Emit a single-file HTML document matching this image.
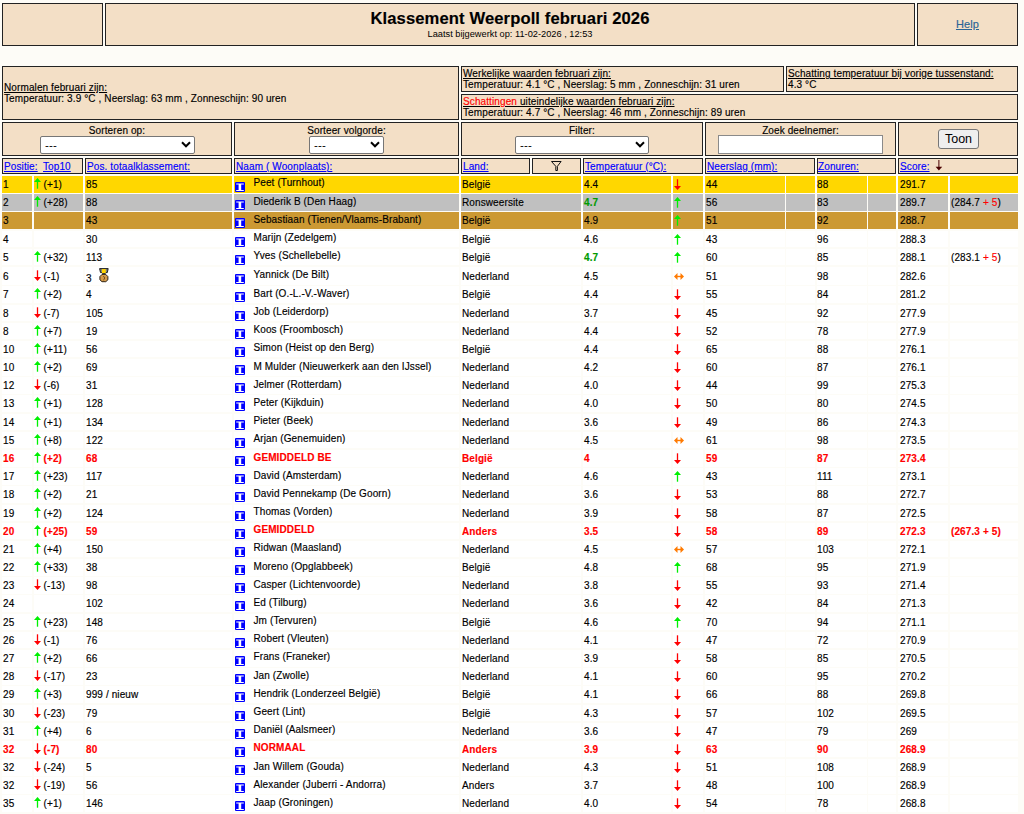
<!DOCTYPE html>
<html><head><meta charset="utf-8"><title>Klassement Weerpoll februari 2026</title>
<style>
html,body{margin:0;padding:0;background:#FDFCF7;width:1024px;height:814px;overflow:hidden;position:relative}
body{font-family:"Liberation Sans",sans-serif;color:#000}
.b{position:absolute;box-sizing:border-box;border:1px solid #222;background:#F3DFC6}
.c{position:absolute}
.t{position:absolute;font-size:10px;line-height:11px;white-space:nowrap;letter-spacing:0.11px;-webkit-text-stroke:0.15px currentColor}
.lk{color:#0000FF;text-decoration:underline}
.rd{color:#FF0000;font-weight:bold}
.ic{position:absolute;line-height:0}
.ic svg{display:block}
.sel{position:absolute;box-sizing:border-box;border:1px solid #767676;border-radius:2px;background:#fff}
.dash{position:absolute;left:4px;top:1.5px;font-size:11.5px;line-height:12px;letter-spacing:0.2px}
.inp{position:absolute;box-sizing:border-box;border:1px solid #8a8a8a;background:#fff}
.btn{position:absolute;box-sizing:border-box;border:1px solid #767676;border-radius:3px;background:#EFEFEF;font-size:12.5px;line-height:18px;text-align:center}
</style></head><body>
<div class="b" style="left:2px;top:3px;width:101px;height:43px"></div>
<div class="b" style="left:105px;top:3px;width:810px;height:43px"></div>
<div class="b" style="left:917px;top:3px;width:101px;height:43px"></div>
<div class="t" style="left:105px;top:9px;width:810px;text-align:center;font-size:16.6px;font-weight:bold;line-height:19px">Klassement Weerpoll februari 2026</div>
<div class="t" style="left:105px;top:29px;width:810px;text-align:center;font-size:9.25px;line-height:10px;-webkit-text-stroke:0;letter-spacing:0">Laatst bijgewerkt op: 11-02-2026 , 12:53</div>
<div class="t" style="left:917px;top:18px;width:101px;text-align:center;font-size:11px;line-height:13px;color:#2A6496;text-decoration:underline">Help</div>
<div class="b" style="left:2px;top:66px;width:457px;height:54px"></div>
<div class="b" style="left:461px;top:66px;width:323px;height:26px"></div>
<div class="b" style="left:786px;top:66px;width:232px;height:26px"></div>
<div class="b" style="left:461px;top:94px;width:557px;height:26px"></div>
<div class="t" style="left:4px;top:82px"><u>Normalen februari zijn:</u></div>
<div class="t" style="left:4px;top:93px">Temperatuur: 3.9 °C , Neerslag: 63 mm , Zonneschijn: 90 uren</div>
<div class="t" style="left:463px;top:68px"><u>Werkelijke waarden februari zijn:</u></div>
<div class="t" style="left:463px;top:79px">Temperatuur: 4.1 °C , Neerslag: 5 mm , Zonneschijn: 31 uren</div>
<div class="t" style="left:788px;top:68px"><u>Schatting temperatuur bij vorige tussenstand:</u></div>
<div class="t" style="left:788px;top:79px">4.3 °C</div>
<div class="t" style="left:463px;top:96px"><u><span style="color:#FF0000">Schattingen</span> uiteindelijke waarden februari zijn:</u></div>
<div class="t" style="left:463px;top:107px">Temperatuur: 4.7 °C , Neerslag: 46 mm , Zonneschijn: 89 uren</div>
<div class="b" style="left:2px;top:122px;width:230px;height:34px"></div>
<div class="b" style="left:234px;top:122px;width:225px;height:34px"></div>
<div class="b" style="left:461px;top:122px;width:242px;height:34px"></div>
<div class="b" style="left:705px;top:122px;width:191px;height:34px"></div>
<div class="b" style="left:898px;top:122px;width:120px;height:34px"></div>
<div class="t" style="left:2px;top:125px;width:230px;text-align:center;">Sorteren op:</div>
<div class="t" style="left:234px;top:125px;width:225px;text-align:center;">Sorteer volgorde:</div>
<div class="t" style="left:461px;top:125px;width:242px;text-align:center;">Filter:</div>
<div class="t" style="left:705px;top:125px;width:191px;text-align:center;">Zoek deelnemer:</div>
<div class="sel" style="left:40px;top:136px;width:155px;height:18px"><span class="dash">---</span><svg style="position:absolute;right:3px;top:4px" width="10" height="7" viewBox="0 0 10 7"><path d="M1 1.3 L5 5.3 L9 1.3" fill="none" stroke="#000" stroke-width="2"/></svg></div>
<div class="sel" style="left:309px;top:136px;width:75px;height:18px"><span class="dash">---</span><svg style="position:absolute;right:3px;top:4px" width="10" height="7" viewBox="0 0 10 7"><path d="M1 1.3 L5 5.3 L9 1.3" fill="none" stroke="#000" stroke-width="2"/></svg></div>
<div class="sel" style="left:515px;top:136px;width:134px;height:18px"><span class="dash">---</span><svg style="position:absolute;right:3px;top:4px" width="10" height="7" viewBox="0 0 10 7"><path d="M1 1.3 L5 5.3 L9 1.3" fill="none" stroke="#000" stroke-width="2"/></svg></div>
<div class="inp" style="left:718px;top:135px;width:165px;height:19px"></div>
<div class="btn" style="left:938px;top:129px;width:41px;height:20px">Toon</div>
<div class="b" style="left:2px;top:158px;width:81px;height:16px"></div>
<div class="b" style="left:85px;top:158px;width:147px;height:16px"></div>
<div class="b" style="left:234px;top:158px;width:225px;height:16px"></div>
<div class="b" style="left:461px;top:158px;width:69px;height:16px"></div>
<div class="b" style="left:532px;top:158px;width:49px;height:16px"></div>
<div class="b" style="left:583px;top:158px;width:120px;height:16px"></div>
<div class="b" style="left:705px;top:158px;width:110px;height:16px"></div>
<div class="b" style="left:817px;top:158px;width:79px;height:16px"></div>
<div class="b" style="left:898px;top:158px;width:120px;height:16px"></div>
<div class="t lk" style="left:4px;top:161px">Positie:</div>
<div class="t lk" style="left:43px;top:161px">Top10</div>
<div class="t lk" style="left:87px;top:161px">Pos. totaalklassement:</div>
<div class="t lk" style="left:236px;top:161px">Naam ( Woonplaats):</div>
<div class="t lk" style="left:463px;top:161px">Land:</div>
<svg style="position:absolute;left:551px;top:161px" width="12" height="12" viewBox="0 0 12 12"><path d="M0.5 0.5 H10.1 L6.4 5.3 V9.5 H4.8 V5.3 Z" fill="none" stroke="#111" stroke-width="1" stroke-linejoin="round"/></svg>
<div class="t lk" style="left:585px;top:161px">Temperatuur (°C):</div>
<div class="t lk" style="left:707px;top:161px">Neerslag (mm):</div>
<div class="t lk" style="left:818px;top:161px">Zonuren:</div>
<div class="t lk" style="left:900px;top:161px">Score:</div>
<svg style="position:absolute;left:935px;top:160px" width="8" height="12" viewBox="0 0 8 12"><path d="M3.9 0 V7.5" stroke="#4A0000" stroke-width="1"/><path d="M0.6 6.8 H7.2 L3.9 10.6 Z" fill="#4A0000"/></svg>
<div class="c" style="left:2px;top:176.000px;width:30px;height:16.580px;background:#FFD700"></div>
<div class="c" style="left:34px;top:176.000px;width:49px;height:16.580px;background:#FFD700"></div>
<div class="c" style="left:85px;top:176.000px;width:147px;height:16.580px;background:#FFD700"></div>
<div class="c" style="left:234px;top:176.000px;width:225px;height:16.580px;background:#FFD700"></div>
<div class="c" style="left:461px;top:176.000px;width:120px;height:16.580px;background:#FFD700"></div>
<div class="c" style="left:583px;top:176.000px;width:88px;height:16.580px;background:#FFD700"></div>
<div class="c" style="left:673px;top:176.000px;width:30px;height:16.580px;background:#FFD700"></div>
<div class="c" style="left:705px;top:176.000px;width:80px;height:16.580px;background:#FFD700"></div>
<div class="c" style="left:786px;top:176.000px;width:29px;height:16.580px;background:#FFD700"></div>
<div class="c" style="left:817px;top:176.000px;width:50px;height:16.580px;background:#FFD700"></div>
<div class="c" style="left:868px;top:176.000px;width:28px;height:16.580px;background:#FFD700"></div>
<div class="c" style="left:898px;top:176.000px;width:50px;height:16.580px;background:#FFD700"></div>
<div class="c" style="left:950px;top:176.000px;width:68px;height:16.580px;background:#FFD700"></div>
<div class="t" style="left:3px;top:179px">1</div>
<div class="ic" style="left:34px;top:177.5px"><svg width="7" height="11" viewBox="0 0 7 11"><path d="M3.5 0 L7 4 H0 Z" fill="#00F000"/><rect x="2.85" y="3.5" width="1.3" height="7.2" fill="#00F000"/></svg></div>
<div class="t" style="left:43.5px;top:179px">(+1)</div>
<div class="t" style="left:86px;top:179px">85</div>
<div class="ic" style="left:235px;top:182px"><svg width="10" height="10" viewBox="0 0 10 10"><rect x="0" y="0" width="10" height="10" rx="1" fill="#0000FF"/><path d="M1.2 1.5 H8.8 V2.6 H6.2 V7.9 H8.8 V9.1 H1.2 V7.9 H3.6 V2.6 H1.2 Z" fill="#FFF"/></svg></div>
<div class="t" style="left:253.5px;top:177px">Peet (Turnhout)</div>
<div class="t" style="left:462px;top:179px">België</div>
<div class="t" style="left:584px;top:179px">4.4</div>
<div class="ic" style="left:674px;top:179px"><svg width="7" height="11" viewBox="0 0 7 11"><rect x="2.85" y="0.3" width="1.3" height="7.2" fill="#FF0000"/><path d="M0 7 H7 L3.5 11 Z" fill="#FF0000"/></svg></div>
<div class="t" style="left:706px;top:179px">44</div>
<div class="t" style="left:817px;top:179px">88</div>
<div class="t" style="left:900px;top:179px">291.7</div>
<div class="c" style="left:2px;top:194.180px;width:30px;height:16.580px;background:#C0C0C0"></div>
<div class="c" style="left:34px;top:194.180px;width:49px;height:16.580px;background:#C0C0C0"></div>
<div class="c" style="left:85px;top:194.180px;width:147px;height:16.580px;background:#C0C0C0"></div>
<div class="c" style="left:234px;top:194.180px;width:225px;height:16.580px;background:#C0C0C0"></div>
<div class="c" style="left:461px;top:194.180px;width:120px;height:16.580px;background:#C0C0C0"></div>
<div class="c" style="left:583px;top:194.180px;width:88px;height:16.580px;background:#C0C0C0"></div>
<div class="c" style="left:673px;top:194.180px;width:30px;height:16.580px;background:#C0C0C0"></div>
<div class="c" style="left:705px;top:194.180px;width:80px;height:16.580px;background:#C0C0C0"></div>
<div class="c" style="left:786px;top:194.180px;width:29px;height:16.580px;background:#C0C0C0"></div>
<div class="c" style="left:817px;top:194.180px;width:50px;height:16.580px;background:#C0C0C0"></div>
<div class="c" style="left:868px;top:194.180px;width:28px;height:16.580px;background:#C0C0C0"></div>
<div class="c" style="left:898px;top:194.180px;width:50px;height:16.580px;background:#C0C0C0"></div>
<div class="c" style="left:950px;top:194.180px;width:68px;height:16.580px;background:#C0C0C0"></div>
<div class="t" style="left:3px;top:197px">2</div>
<div class="ic" style="left:34px;top:195.5px"><svg width="7" height="11" viewBox="0 0 7 11"><path d="M3.5 0 L7 4 H0 Z" fill="#00F000"/><rect x="2.85" y="3.5" width="1.3" height="7.2" fill="#00F000"/></svg></div>
<div class="t" style="left:43.5px;top:197px">(+28)</div>
<div class="t" style="left:86px;top:197px">88</div>
<div class="ic" style="left:235px;top:200px"><svg width="10" height="10" viewBox="0 0 10 10"><rect x="0" y="0" width="10" height="10" rx="1" fill="#0000FF"/><path d="M1.2 1.5 H8.8 V2.6 H6.2 V7.9 H8.8 V9.1 H1.2 V7.9 H3.6 V2.6 H1.2 Z" fill="#FFF"/></svg></div>
<div class="t" style="left:253.5px;top:196px">Diederik B (Den Haag)</div>
<div class="t" style="left:462px;top:197px">Ronsweersite</div>
<div class="t" style="left:584px;top:197px;font-weight:bold;color:#009A00">4.7</div>
<div class="ic" style="left:674px;top:197px"><svg width="7" height="11" viewBox="0 0 7 11"><path d="M3.5 0 L7 4 H0 Z" fill="#00F000"/><rect x="2.85" y="3.5" width="1.3" height="7.2" fill="#00F000"/></svg></div>
<div class="t" style="left:706px;top:197px">56</div>
<div class="t" style="left:817px;top:197px">83</div>
<div class="t" style="left:900px;top:197px">289.7</div>
<div class="t" style="left:951px;top:197px">(284.7 <span style="color:#FF0000">+ 5</span>)</div>
<div class="c" style="left:2px;top:212.360px;width:30px;height:16.580px;background:#CC9933"></div>
<div class="c" style="left:34px;top:212.360px;width:49px;height:16.580px;background:#CC9933"></div>
<div class="c" style="left:85px;top:212.360px;width:147px;height:16.580px;background:#CC9933"></div>
<div class="c" style="left:234px;top:212.360px;width:225px;height:16.580px;background:#CC9933"></div>
<div class="c" style="left:461px;top:212.360px;width:120px;height:16.580px;background:#CC9933"></div>
<div class="c" style="left:583px;top:212.360px;width:88px;height:16.580px;background:#CC9933"></div>
<div class="c" style="left:673px;top:212.360px;width:30px;height:16.580px;background:#CC9933"></div>
<div class="c" style="left:705px;top:212.360px;width:80px;height:16.580px;background:#CC9933"></div>
<div class="c" style="left:786px;top:212.360px;width:29px;height:16.580px;background:#CC9933"></div>
<div class="c" style="left:817px;top:212.360px;width:50px;height:16.580px;background:#CC9933"></div>
<div class="c" style="left:868px;top:212.360px;width:28px;height:16.580px;background:#CC9933"></div>
<div class="c" style="left:898px;top:212.360px;width:50px;height:16.580px;background:#CC9933"></div>
<div class="c" style="left:950px;top:212.360px;width:68px;height:16.580px;background:#CC9933"></div>
<div class="t" style="left:3px;top:215px">3</div>
<div class="t" style="left:86px;top:215px">43</div>
<div class="ic" style="left:235px;top:218px"><svg width="10" height="10" viewBox="0 0 10 10"><rect x="0" y="0" width="10" height="10" rx="1" fill="#0000FF"/><path d="M1.2 1.5 H8.8 V2.6 H6.2 V7.9 H8.8 V9.1 H1.2 V7.9 H3.6 V2.6 H1.2 Z" fill="#FFF"/></svg></div>
<div class="t" style="left:253.5px;top:214px">Sebastiaan (Tienen/Vlaams-Brabant)</div>
<div class="t" style="left:462px;top:215px">België</div>
<div class="t" style="left:584px;top:215px">4.9</div>
<div class="ic" style="left:674px;top:215px"><svg width="7" height="11" viewBox="0 0 7 11"><path d="M3.5 0 L7 4 H0 Z" fill="#00F000"/><rect x="2.85" y="3.5" width="1.3" height="7.2" fill="#00F000"/></svg></div>
<div class="t" style="left:706px;top:215px">51</div>
<div class="t" style="left:817px;top:215px">92</div>
<div class="t" style="left:900px;top:215px">288.7</div>
<div class="c" style="left:2px;top:230.540px;width:30px;height:16.580px;background:#FFFFFF"></div>
<div class="c" style="left:34px;top:230.540px;width:49px;height:16.580px;background:#FFFFFF"></div>
<div class="c" style="left:85px;top:230.540px;width:147px;height:16.580px;background:#FFFFFF"></div>
<div class="c" style="left:234px;top:230.540px;width:225px;height:16.580px;background:#FFFFFF"></div>
<div class="c" style="left:461px;top:230.540px;width:120px;height:16.580px;background:#FFFFFF"></div>
<div class="c" style="left:583px;top:230.540px;width:88px;height:16.580px;background:#FFFFFF"></div>
<div class="c" style="left:673px;top:230.540px;width:30px;height:16.580px;background:#FFFFFF"></div>
<div class="c" style="left:705px;top:230.540px;width:80px;height:16.580px;background:#FFFFFF"></div>
<div class="c" style="left:786px;top:230.540px;width:29px;height:16.580px;background:#FFFFFF"></div>
<div class="c" style="left:817px;top:230.540px;width:50px;height:16.580px;background:#FFFFFF"></div>
<div class="c" style="left:868px;top:230.540px;width:28px;height:16.580px;background:#FFFFFF"></div>
<div class="c" style="left:898px;top:230.540px;width:50px;height:16.580px;background:#FFFFFF"></div>
<div class="c" style="left:950px;top:230.540px;width:68px;height:16.580px;background:#FFFFFF"></div>
<div class="t" style="left:3px;top:234px">4</div>
<div class="t" style="left:86px;top:234px">30</div>
<div class="ic" style="left:235px;top:237px"><svg width="10" height="10" viewBox="0 0 10 10"><rect x="0" y="0" width="10" height="10" rx="1" fill="#0000FF"/><path d="M1.2 1.5 H8.8 V2.6 H6.2 V7.9 H8.8 V9.1 H1.2 V7.9 H3.6 V2.6 H1.2 Z" fill="#FFF"/></svg></div>
<div class="t" style="left:253.5px;top:232px">Marijn (Zedelgem)</div>
<div class="t" style="left:462px;top:234px">België</div>
<div class="t" style="left:584px;top:234px">4.6</div>
<div class="ic" style="left:674px;top:234px"><svg width="7" height="11" viewBox="0 0 7 11"><path d="M3.5 0 L7 4 H0 Z" fill="#00F000"/><rect x="2.85" y="3.5" width="1.3" height="7.2" fill="#00F000"/></svg></div>
<div class="t" style="left:706px;top:234px">43</div>
<div class="t" style="left:817px;top:234px">96</div>
<div class="t" style="left:900px;top:234px">288.3</div>
<div class="c" style="left:2px;top:248.720px;width:30px;height:16.580px;background:#FFFFFF"></div>
<div class="c" style="left:34px;top:248.720px;width:49px;height:16.580px;background:#FFFFFF"></div>
<div class="c" style="left:85px;top:248.720px;width:147px;height:16.580px;background:#FFFFFF"></div>
<div class="c" style="left:234px;top:248.720px;width:225px;height:16.580px;background:#FFFFFF"></div>
<div class="c" style="left:461px;top:248.720px;width:120px;height:16.580px;background:#FFFFFF"></div>
<div class="c" style="left:583px;top:248.720px;width:88px;height:16.580px;background:#FFFFFF"></div>
<div class="c" style="left:673px;top:248.720px;width:30px;height:16.580px;background:#FFFFFF"></div>
<div class="c" style="left:705px;top:248.720px;width:80px;height:16.580px;background:#FFFFFF"></div>
<div class="c" style="left:786px;top:248.720px;width:29px;height:16.580px;background:#FFFFFF"></div>
<div class="c" style="left:817px;top:248.720px;width:50px;height:16.580px;background:#FFFFFF"></div>
<div class="c" style="left:868px;top:248.720px;width:28px;height:16.580px;background:#FFFFFF"></div>
<div class="c" style="left:898px;top:248.720px;width:50px;height:16.580px;background:#FFFFFF"></div>
<div class="c" style="left:950px;top:248.720px;width:68px;height:16.580px;background:#FFFFFF"></div>
<div class="t" style="left:3px;top:252px">5</div>
<div class="ic" style="left:34px;top:250.5px"><svg width="7" height="11" viewBox="0 0 7 11"><path d="M3.5 0 L7 4 H0 Z" fill="#00F000"/><rect x="2.85" y="3.5" width="1.3" height="7.2" fill="#00F000"/></svg></div>
<div class="t" style="left:43.5px;top:252px">(+32)</div>
<div class="t" style="left:86px;top:252px">113</div>
<div class="ic" style="left:235px;top:255px"><svg width="10" height="10" viewBox="0 0 10 10"><rect x="0" y="0" width="10" height="10" rx="1" fill="#0000FF"/><path d="M1.2 1.5 H8.8 V2.6 H6.2 V7.9 H8.8 V9.1 H1.2 V7.9 H3.6 V2.6 H1.2 Z" fill="#FFF"/></svg></div>
<div class="t" style="left:253.5px;top:250px">Yves (Schellebelle)</div>
<div class="t" style="left:462px;top:252px">België</div>
<div class="t" style="left:584px;top:252px;font-weight:bold;color:#009A00">4.7</div>
<div class="ic" style="left:674px;top:252px"><svg width="7" height="11" viewBox="0 0 7 11"><path d="M3.5 0 L7 4 H0 Z" fill="#00F000"/><rect x="2.85" y="3.5" width="1.3" height="7.2" fill="#00F000"/></svg></div>
<div class="t" style="left:706px;top:252px">60</div>
<div class="t" style="left:817px;top:252px">85</div>
<div class="t" style="left:900px;top:252px">288.1</div>
<div class="t" style="left:951px;top:252px">(283.1 <span style="color:#FF0000">+ 5</span>)</div>
<div class="c" style="left:2px;top:266.900px;width:30px;height:17.880px;background:#FFFFFF"></div>
<div class="c" style="left:34px;top:266.900px;width:49px;height:17.880px;background:#FFFFFF"></div>
<div class="c" style="left:85px;top:266.900px;width:147px;height:17.880px;background:#FFFFFF"></div>
<div class="c" style="left:234px;top:266.900px;width:225px;height:17.880px;background:#FFFFFF"></div>
<div class="c" style="left:461px;top:266.900px;width:120px;height:17.880px;background:#FFFFFF"></div>
<div class="c" style="left:583px;top:266.900px;width:88px;height:17.880px;background:#FFFFFF"></div>
<div class="c" style="left:673px;top:266.900px;width:30px;height:17.880px;background:#FFFFFF"></div>
<div class="c" style="left:705px;top:266.900px;width:80px;height:17.880px;background:#FFFFFF"></div>
<div class="c" style="left:786px;top:266.900px;width:29px;height:17.880px;background:#FFFFFF"></div>
<div class="c" style="left:817px;top:266.900px;width:50px;height:17.880px;background:#FFFFFF"></div>
<div class="c" style="left:868px;top:266.900px;width:28px;height:17.880px;background:#FFFFFF"></div>
<div class="c" style="left:898px;top:266.900px;width:50px;height:17.880px;background:#FFFFFF"></div>
<div class="c" style="left:950px;top:266.900px;width:68px;height:17.880px;background:#FFFFFF"></div>
<div class="t" style="left:3px;top:271px">6</div>
<div class="ic" style="left:34px;top:269.5px"><svg width="7" height="11" viewBox="0 0 7 11"><rect x="2.85" y="0.3" width="1.3" height="7.2" fill="#FF0000"/><path d="M0 7 H7 L3.5 11 Z" fill="#FF0000"/></svg></div>
<div class="t" style="left:43.5px;top:271px">(-1)</div>
<div class="t" style="left:86px;top:273px">3</div>
<div class="ic" style="left:99.3px;top:268px"><svg width="10" height="15" viewBox="0 0 10 15"><path d="M0.6 0.6 H9.2 L8.3 4.6 H1.5 Z" fill="#7A7F86" stroke="#111" stroke-width="0.9"/><rect x="2.9" y="1.1" width="3.9" height="4" fill="#FFD400"/><rect x="3.2" y="5.2" width="3.4" height="1.1" fill="#111"/><path d="M3 6.4 H6.8 L8.9 8.6 V11.8 L6.8 13.7 H3 L0.9 11.8 V8.6 Z" fill="#D49A4A" stroke="#1A1208" stroke-width="0.9"/><path d="M4.3 8.4 Q6.3 9.4 5.4 10.2 Q6.3 11 4.3 12" fill="none" stroke="#5A3A10" stroke-width="0.9"/></svg></div>
<div class="ic" style="left:235px;top:274px"><svg width="10" height="10" viewBox="0 0 10 10"><rect x="0" y="0" width="10" height="10" rx="1" fill="#0000FF"/><path d="M1.2 1.5 H8.8 V2.6 H6.2 V7.9 H8.8 V9.1 H1.2 V7.9 H3.6 V2.6 H1.2 Z" fill="#FFF"/></svg></div>
<div class="t" style="left:253.5px;top:269px">Yannick (De Bilt)</div>
<div class="t" style="left:462px;top:271px">Nederland</div>
<div class="t" style="left:584px;top:271px">4.5</div>
<div class="ic" style="left:674px;top:273px"><svg width="10" height="7" viewBox="0 0 10 7"><path d="M0 3.5 L3.5 0 V7 Z" fill="#FF7A00"/><path d="M10 3.5 L6.5 0 V7 Z" fill="#FF7A00"/><rect x="3" y="2.8" width="4" height="1.4" fill="#FF7A00"/></svg></div>
<div class="t" style="left:706px;top:271px">51</div>
<div class="t" style="left:817px;top:271px">98</div>
<div class="t" style="left:900px;top:271px">282.6</div>
<div class="c" style="left:2px;top:286.380px;width:30px;height:16.580px;background:#FFFFFF"></div>
<div class="c" style="left:34px;top:286.380px;width:49px;height:16.580px;background:#FFFFFF"></div>
<div class="c" style="left:85px;top:286.380px;width:147px;height:16.580px;background:#FFFFFF"></div>
<div class="c" style="left:234px;top:286.380px;width:225px;height:16.580px;background:#FFFFFF"></div>
<div class="c" style="left:461px;top:286.380px;width:120px;height:16.580px;background:#FFFFFF"></div>
<div class="c" style="left:583px;top:286.380px;width:88px;height:16.580px;background:#FFFFFF"></div>
<div class="c" style="left:673px;top:286.380px;width:30px;height:16.580px;background:#FFFFFF"></div>
<div class="c" style="left:705px;top:286.380px;width:80px;height:16.580px;background:#FFFFFF"></div>
<div class="c" style="left:786px;top:286.380px;width:29px;height:16.580px;background:#FFFFFF"></div>
<div class="c" style="left:817px;top:286.380px;width:50px;height:16.580px;background:#FFFFFF"></div>
<div class="c" style="left:868px;top:286.380px;width:28px;height:16.580px;background:#FFFFFF"></div>
<div class="c" style="left:898px;top:286.380px;width:50px;height:16.580px;background:#FFFFFF"></div>
<div class="c" style="left:950px;top:286.380px;width:68px;height:16.580px;background:#FFFFFF"></div>
<div class="t" style="left:3px;top:289px">7</div>
<div class="ic" style="left:34px;top:287.5px"><svg width="7" height="11" viewBox="0 0 7 11"><path d="M3.5 0 L7 4 H0 Z" fill="#00F000"/><rect x="2.85" y="3.5" width="1.3" height="7.2" fill="#00F000"/></svg></div>
<div class="t" style="left:43.5px;top:289px">(+2)</div>
<div class="t" style="left:86px;top:289px">4</div>
<div class="ic" style="left:235px;top:292px"><svg width="10" height="10" viewBox="0 0 10 10"><rect x="0" y="0" width="10" height="10" rx="1" fill="#0000FF"/><path d="M1.2 1.5 H8.8 V2.6 H6.2 V7.9 H8.8 V9.1 H1.2 V7.9 H3.6 V2.6 H1.2 Z" fill="#FFF"/></svg></div>
<div class="t" style="left:253.5px;top:288px">Bart (O.-L.-V.-Waver)</div>
<div class="t" style="left:462px;top:289px">België</div>
<div class="t" style="left:584px;top:289px">4.4</div>
<div class="ic" style="left:674px;top:289px"><svg width="7" height="11" viewBox="0 0 7 11"><rect x="2.85" y="0.3" width="1.3" height="7.2" fill="#FF0000"/><path d="M0 7 H7 L3.5 11 Z" fill="#FF0000"/></svg></div>
<div class="t" style="left:706px;top:289px">55</div>
<div class="t" style="left:817px;top:289px">84</div>
<div class="t" style="left:900px;top:289px">281.2</div>
<div class="c" style="left:2px;top:304.560px;width:30px;height:16.580px;background:#FFFFFF"></div>
<div class="c" style="left:34px;top:304.560px;width:49px;height:16.580px;background:#FFFFFF"></div>
<div class="c" style="left:85px;top:304.560px;width:147px;height:16.580px;background:#FFFFFF"></div>
<div class="c" style="left:234px;top:304.560px;width:225px;height:16.580px;background:#FFFFFF"></div>
<div class="c" style="left:461px;top:304.560px;width:120px;height:16.580px;background:#FFFFFF"></div>
<div class="c" style="left:583px;top:304.560px;width:88px;height:16.580px;background:#FFFFFF"></div>
<div class="c" style="left:673px;top:304.560px;width:30px;height:16.580px;background:#FFFFFF"></div>
<div class="c" style="left:705px;top:304.560px;width:80px;height:16.580px;background:#FFFFFF"></div>
<div class="c" style="left:786px;top:304.560px;width:29px;height:16.580px;background:#FFFFFF"></div>
<div class="c" style="left:817px;top:304.560px;width:50px;height:16.580px;background:#FFFFFF"></div>
<div class="c" style="left:868px;top:304.560px;width:28px;height:16.580px;background:#FFFFFF"></div>
<div class="c" style="left:898px;top:304.560px;width:50px;height:16.580px;background:#FFFFFF"></div>
<div class="c" style="left:950px;top:304.560px;width:68px;height:16.580px;background:#FFFFFF"></div>
<div class="t" style="left:3px;top:308px">8</div>
<div class="ic" style="left:34px;top:306.5px"><svg width="7" height="11" viewBox="0 0 7 11"><rect x="2.85" y="0.3" width="1.3" height="7.2" fill="#FF0000"/><path d="M0 7 H7 L3.5 11 Z" fill="#FF0000"/></svg></div>
<div class="t" style="left:43.5px;top:308px">(-7)</div>
<div class="t" style="left:86px;top:308px">105</div>
<div class="ic" style="left:235px;top:311px"><svg width="10" height="10" viewBox="0 0 10 10"><rect x="0" y="0" width="10" height="10" rx="1" fill="#0000FF"/><path d="M1.2 1.5 H8.8 V2.6 H6.2 V7.9 H8.8 V9.1 H1.2 V7.9 H3.6 V2.6 H1.2 Z" fill="#FFF"/></svg></div>
<div class="t" style="left:253.5px;top:306px">Job (Leiderdorp)</div>
<div class="t" style="left:462px;top:308px">Nederland</div>
<div class="t" style="left:584px;top:308px">3.7</div>
<div class="ic" style="left:674px;top:308px"><svg width="7" height="11" viewBox="0 0 7 11"><rect x="2.85" y="0.3" width="1.3" height="7.2" fill="#FF0000"/><path d="M0 7 H7 L3.5 11 Z" fill="#FF0000"/></svg></div>
<div class="t" style="left:706px;top:308px">45</div>
<div class="t" style="left:817px;top:308px">92</div>
<div class="t" style="left:900px;top:308px">277.9</div>
<div class="c" style="left:2px;top:322.740px;width:30px;height:16.580px;background:#FFFFFF"></div>
<div class="c" style="left:34px;top:322.740px;width:49px;height:16.580px;background:#FFFFFF"></div>
<div class="c" style="left:85px;top:322.740px;width:147px;height:16.580px;background:#FFFFFF"></div>
<div class="c" style="left:234px;top:322.740px;width:225px;height:16.580px;background:#FFFFFF"></div>
<div class="c" style="left:461px;top:322.740px;width:120px;height:16.580px;background:#FFFFFF"></div>
<div class="c" style="left:583px;top:322.740px;width:88px;height:16.580px;background:#FFFFFF"></div>
<div class="c" style="left:673px;top:322.740px;width:30px;height:16.580px;background:#FFFFFF"></div>
<div class="c" style="left:705px;top:322.740px;width:80px;height:16.580px;background:#FFFFFF"></div>
<div class="c" style="left:786px;top:322.740px;width:29px;height:16.580px;background:#FFFFFF"></div>
<div class="c" style="left:817px;top:322.740px;width:50px;height:16.580px;background:#FFFFFF"></div>
<div class="c" style="left:868px;top:322.740px;width:28px;height:16.580px;background:#FFFFFF"></div>
<div class="c" style="left:898px;top:322.740px;width:50px;height:16.580px;background:#FFFFFF"></div>
<div class="c" style="left:950px;top:322.740px;width:68px;height:16.580px;background:#FFFFFF"></div>
<div class="t" style="left:3px;top:326px">8</div>
<div class="ic" style="left:34px;top:324.5px"><svg width="7" height="11" viewBox="0 0 7 11"><path d="M3.5 0 L7 4 H0 Z" fill="#00F000"/><rect x="2.85" y="3.5" width="1.3" height="7.2" fill="#00F000"/></svg></div>
<div class="t" style="left:43.5px;top:326px">(+7)</div>
<div class="t" style="left:86px;top:326px">19</div>
<div class="ic" style="left:235px;top:329px"><svg width="10" height="10" viewBox="0 0 10 10"><rect x="0" y="0" width="10" height="10" rx="1" fill="#0000FF"/><path d="M1.2 1.5 H8.8 V2.6 H6.2 V7.9 H8.8 V9.1 H1.2 V7.9 H3.6 V2.6 H1.2 Z" fill="#FFF"/></svg></div>
<div class="t" style="left:253.5px;top:324px">Koos (Froombosch)</div>
<div class="t" style="left:462px;top:326px">Nederland</div>
<div class="t" style="left:584px;top:326px">4.4</div>
<div class="ic" style="left:674px;top:326px"><svg width="7" height="11" viewBox="0 0 7 11"><rect x="2.85" y="0.3" width="1.3" height="7.2" fill="#FF0000"/><path d="M0 7 H7 L3.5 11 Z" fill="#FF0000"/></svg></div>
<div class="t" style="left:706px;top:326px">52</div>
<div class="t" style="left:817px;top:326px">78</div>
<div class="t" style="left:900px;top:326px">277.9</div>
<div class="c" style="left:2px;top:340.920px;width:30px;height:16.580px;background:#FFFFFF"></div>
<div class="c" style="left:34px;top:340.920px;width:49px;height:16.580px;background:#FFFFFF"></div>
<div class="c" style="left:85px;top:340.920px;width:147px;height:16.580px;background:#FFFFFF"></div>
<div class="c" style="left:234px;top:340.920px;width:225px;height:16.580px;background:#FFFFFF"></div>
<div class="c" style="left:461px;top:340.920px;width:120px;height:16.580px;background:#FFFFFF"></div>
<div class="c" style="left:583px;top:340.920px;width:88px;height:16.580px;background:#FFFFFF"></div>
<div class="c" style="left:673px;top:340.920px;width:30px;height:16.580px;background:#FFFFFF"></div>
<div class="c" style="left:705px;top:340.920px;width:80px;height:16.580px;background:#FFFFFF"></div>
<div class="c" style="left:786px;top:340.920px;width:29px;height:16.580px;background:#FFFFFF"></div>
<div class="c" style="left:817px;top:340.920px;width:50px;height:16.580px;background:#FFFFFF"></div>
<div class="c" style="left:868px;top:340.920px;width:28px;height:16.580px;background:#FFFFFF"></div>
<div class="c" style="left:898px;top:340.920px;width:50px;height:16.580px;background:#FFFFFF"></div>
<div class="c" style="left:950px;top:340.920px;width:68px;height:16.580px;background:#FFFFFF"></div>
<div class="t" style="left:3px;top:344px">10</div>
<div class="ic" style="left:34px;top:342.5px"><svg width="7" height="11" viewBox="0 0 7 11"><path d="M3.5 0 L7 4 H0 Z" fill="#00F000"/><rect x="2.85" y="3.5" width="1.3" height="7.2" fill="#00F000"/></svg></div>
<div class="t" style="left:43.5px;top:344px">(+11)</div>
<div class="t" style="left:86px;top:344px">56</div>
<div class="ic" style="left:235px;top:347px"><svg width="10" height="10" viewBox="0 0 10 10"><rect x="0" y="0" width="10" height="10" rx="1" fill="#0000FF"/><path d="M1.2 1.5 H8.8 V2.6 H6.2 V7.9 H8.8 V9.1 H1.2 V7.9 H3.6 V2.6 H1.2 Z" fill="#FFF"/></svg></div>
<div class="t" style="left:253.5px;top:342px">Simon (Heist op den Berg)</div>
<div class="t" style="left:462px;top:344px">België</div>
<div class="t" style="left:584px;top:344px">4.4</div>
<div class="ic" style="left:674px;top:344px"><svg width="7" height="11" viewBox="0 0 7 11"><rect x="2.85" y="0.3" width="1.3" height="7.2" fill="#FF0000"/><path d="M0 7 H7 L3.5 11 Z" fill="#FF0000"/></svg></div>
<div class="t" style="left:706px;top:344px">65</div>
<div class="t" style="left:817px;top:344px">88</div>
<div class="t" style="left:900px;top:344px">276.1</div>
<div class="c" style="left:2px;top:359.100px;width:30px;height:16.580px;background:#FFFFFF"></div>
<div class="c" style="left:34px;top:359.100px;width:49px;height:16.580px;background:#FFFFFF"></div>
<div class="c" style="left:85px;top:359.100px;width:147px;height:16.580px;background:#FFFFFF"></div>
<div class="c" style="left:234px;top:359.100px;width:225px;height:16.580px;background:#FFFFFF"></div>
<div class="c" style="left:461px;top:359.100px;width:120px;height:16.580px;background:#FFFFFF"></div>
<div class="c" style="left:583px;top:359.100px;width:88px;height:16.580px;background:#FFFFFF"></div>
<div class="c" style="left:673px;top:359.100px;width:30px;height:16.580px;background:#FFFFFF"></div>
<div class="c" style="left:705px;top:359.100px;width:80px;height:16.580px;background:#FFFFFF"></div>
<div class="c" style="left:786px;top:359.100px;width:29px;height:16.580px;background:#FFFFFF"></div>
<div class="c" style="left:817px;top:359.100px;width:50px;height:16.580px;background:#FFFFFF"></div>
<div class="c" style="left:868px;top:359.100px;width:28px;height:16.580px;background:#FFFFFF"></div>
<div class="c" style="left:898px;top:359.100px;width:50px;height:16.580px;background:#FFFFFF"></div>
<div class="c" style="left:950px;top:359.100px;width:68px;height:16.580px;background:#FFFFFF"></div>
<div class="t" style="left:3px;top:362px">10</div>
<div class="ic" style="left:34px;top:360.5px"><svg width="7" height="11" viewBox="0 0 7 11"><path d="M3.5 0 L7 4 H0 Z" fill="#00F000"/><rect x="2.85" y="3.5" width="1.3" height="7.2" fill="#00F000"/></svg></div>
<div class="t" style="left:43.5px;top:362px">(+2)</div>
<div class="t" style="left:86px;top:362px">69</div>
<div class="ic" style="left:235px;top:365px"><svg width="10" height="10" viewBox="0 0 10 10"><rect x="0" y="0" width="10" height="10" rx="1" fill="#0000FF"/><path d="M1.2 1.5 H8.8 V2.6 H6.2 V7.9 H8.8 V9.1 H1.2 V7.9 H3.6 V2.6 H1.2 Z" fill="#FFF"/></svg></div>
<div class="t" style="left:253.5px;top:361px">M Mulder (Nieuwerkerk aan den IJssel)</div>
<div class="t" style="left:462px;top:362px">Nederland</div>
<div class="t" style="left:584px;top:362px">4.2</div>
<div class="ic" style="left:674px;top:362px"><svg width="7" height="11" viewBox="0 0 7 11"><rect x="2.85" y="0.3" width="1.3" height="7.2" fill="#FF0000"/><path d="M0 7 H7 L3.5 11 Z" fill="#FF0000"/></svg></div>
<div class="t" style="left:706px;top:362px">60</div>
<div class="t" style="left:817px;top:362px">87</div>
<div class="t" style="left:900px;top:362px">276.1</div>
<div class="c" style="left:2px;top:377.280px;width:30px;height:16.580px;background:#FFFFFF"></div>
<div class="c" style="left:34px;top:377.280px;width:49px;height:16.580px;background:#FFFFFF"></div>
<div class="c" style="left:85px;top:377.280px;width:147px;height:16.580px;background:#FFFFFF"></div>
<div class="c" style="left:234px;top:377.280px;width:225px;height:16.580px;background:#FFFFFF"></div>
<div class="c" style="left:461px;top:377.280px;width:120px;height:16.580px;background:#FFFFFF"></div>
<div class="c" style="left:583px;top:377.280px;width:88px;height:16.580px;background:#FFFFFF"></div>
<div class="c" style="left:673px;top:377.280px;width:30px;height:16.580px;background:#FFFFFF"></div>
<div class="c" style="left:705px;top:377.280px;width:80px;height:16.580px;background:#FFFFFF"></div>
<div class="c" style="left:786px;top:377.280px;width:29px;height:16.580px;background:#FFFFFF"></div>
<div class="c" style="left:817px;top:377.280px;width:50px;height:16.580px;background:#FFFFFF"></div>
<div class="c" style="left:868px;top:377.280px;width:28px;height:16.580px;background:#FFFFFF"></div>
<div class="c" style="left:898px;top:377.280px;width:50px;height:16.580px;background:#FFFFFF"></div>
<div class="c" style="left:950px;top:377.280px;width:68px;height:16.580px;background:#FFFFFF"></div>
<div class="t" style="left:3px;top:380px">12</div>
<div class="ic" style="left:34px;top:378.5px"><svg width="7" height="11" viewBox="0 0 7 11"><rect x="2.85" y="0.3" width="1.3" height="7.2" fill="#FF0000"/><path d="M0 7 H7 L3.5 11 Z" fill="#FF0000"/></svg></div>
<div class="t" style="left:43.5px;top:380px">(-6)</div>
<div class="t" style="left:86px;top:380px">31</div>
<div class="ic" style="left:235px;top:383px"><svg width="10" height="10" viewBox="0 0 10 10"><rect x="0" y="0" width="10" height="10" rx="1" fill="#0000FF"/><path d="M1.2 1.5 H8.8 V2.6 H6.2 V7.9 H8.8 V9.1 H1.2 V7.9 H3.6 V2.6 H1.2 Z" fill="#FFF"/></svg></div>
<div class="t" style="left:253.5px;top:379px">Jelmer (Rotterdam)</div>
<div class="t" style="left:462px;top:380px">Nederland</div>
<div class="t" style="left:584px;top:380px">4.0</div>
<div class="ic" style="left:674px;top:380px"><svg width="7" height="11" viewBox="0 0 7 11"><rect x="2.85" y="0.3" width="1.3" height="7.2" fill="#FF0000"/><path d="M0 7 H7 L3.5 11 Z" fill="#FF0000"/></svg></div>
<div class="t" style="left:706px;top:380px">44</div>
<div class="t" style="left:817px;top:380px">99</div>
<div class="t" style="left:900px;top:380px">275.3</div>
<div class="c" style="left:2px;top:395.460px;width:30px;height:16.580px;background:#FFFFFF"></div>
<div class="c" style="left:34px;top:395.460px;width:49px;height:16.580px;background:#FFFFFF"></div>
<div class="c" style="left:85px;top:395.460px;width:147px;height:16.580px;background:#FFFFFF"></div>
<div class="c" style="left:234px;top:395.460px;width:225px;height:16.580px;background:#FFFFFF"></div>
<div class="c" style="left:461px;top:395.460px;width:120px;height:16.580px;background:#FFFFFF"></div>
<div class="c" style="left:583px;top:395.460px;width:88px;height:16.580px;background:#FFFFFF"></div>
<div class="c" style="left:673px;top:395.460px;width:30px;height:16.580px;background:#FFFFFF"></div>
<div class="c" style="left:705px;top:395.460px;width:80px;height:16.580px;background:#FFFFFF"></div>
<div class="c" style="left:786px;top:395.460px;width:29px;height:16.580px;background:#FFFFFF"></div>
<div class="c" style="left:817px;top:395.460px;width:50px;height:16.580px;background:#FFFFFF"></div>
<div class="c" style="left:868px;top:395.460px;width:28px;height:16.580px;background:#FFFFFF"></div>
<div class="c" style="left:898px;top:395.460px;width:50px;height:16.580px;background:#FFFFFF"></div>
<div class="c" style="left:950px;top:395.460px;width:68px;height:16.580px;background:#FFFFFF"></div>
<div class="t" style="left:3px;top:398px">13</div>
<div class="ic" style="left:34px;top:396.5px"><svg width="7" height="11" viewBox="0 0 7 11"><path d="M3.5 0 L7 4 H0 Z" fill="#00F000"/><rect x="2.85" y="3.5" width="1.3" height="7.2" fill="#00F000"/></svg></div>
<div class="t" style="left:43.5px;top:398px">(+1)</div>
<div class="t" style="left:86px;top:398px">128</div>
<div class="ic" style="left:235px;top:401px"><svg width="10" height="10" viewBox="0 0 10 10"><rect x="0" y="0" width="10" height="10" rx="1" fill="#0000FF"/><path d="M1.2 1.5 H8.8 V2.6 H6.2 V7.9 H8.8 V9.1 H1.2 V7.9 H3.6 V2.6 H1.2 Z" fill="#FFF"/></svg></div>
<div class="t" style="left:253.5px;top:397px">Peter (Kijkduin)</div>
<div class="t" style="left:462px;top:398px">Nederland</div>
<div class="t" style="left:584px;top:398px">4.0</div>
<div class="ic" style="left:674px;top:398px"><svg width="7" height="11" viewBox="0 0 7 11"><rect x="2.85" y="0.3" width="1.3" height="7.2" fill="#FF0000"/><path d="M0 7 H7 L3.5 11 Z" fill="#FF0000"/></svg></div>
<div class="t" style="left:706px;top:398px">50</div>
<div class="t" style="left:817px;top:398px">80</div>
<div class="t" style="left:900px;top:398px">274.5</div>
<div class="c" style="left:2px;top:413.640px;width:30px;height:16.580px;background:#FFFFFF"></div>
<div class="c" style="left:34px;top:413.640px;width:49px;height:16.580px;background:#FFFFFF"></div>
<div class="c" style="left:85px;top:413.640px;width:147px;height:16.580px;background:#FFFFFF"></div>
<div class="c" style="left:234px;top:413.640px;width:225px;height:16.580px;background:#FFFFFF"></div>
<div class="c" style="left:461px;top:413.640px;width:120px;height:16.580px;background:#FFFFFF"></div>
<div class="c" style="left:583px;top:413.640px;width:88px;height:16.580px;background:#FFFFFF"></div>
<div class="c" style="left:673px;top:413.640px;width:30px;height:16.580px;background:#FFFFFF"></div>
<div class="c" style="left:705px;top:413.640px;width:80px;height:16.580px;background:#FFFFFF"></div>
<div class="c" style="left:786px;top:413.640px;width:29px;height:16.580px;background:#FFFFFF"></div>
<div class="c" style="left:817px;top:413.640px;width:50px;height:16.580px;background:#FFFFFF"></div>
<div class="c" style="left:868px;top:413.640px;width:28px;height:16.580px;background:#FFFFFF"></div>
<div class="c" style="left:898px;top:413.640px;width:50px;height:16.580px;background:#FFFFFF"></div>
<div class="c" style="left:950px;top:413.640px;width:68px;height:16.580px;background:#FFFFFF"></div>
<div class="t" style="left:3px;top:417px">14</div>
<div class="ic" style="left:34px;top:415.5px"><svg width="7" height="11" viewBox="0 0 7 11"><path d="M3.5 0 L7 4 H0 Z" fill="#00F000"/><rect x="2.85" y="3.5" width="1.3" height="7.2" fill="#00F000"/></svg></div>
<div class="t" style="left:43.5px;top:417px">(+1)</div>
<div class="t" style="left:86px;top:417px">134</div>
<div class="ic" style="left:235px;top:420px"><svg width="10" height="10" viewBox="0 0 10 10"><rect x="0" y="0" width="10" height="10" rx="1" fill="#0000FF"/><path d="M1.2 1.5 H8.8 V2.6 H6.2 V7.9 H8.8 V9.1 H1.2 V7.9 H3.6 V2.6 H1.2 Z" fill="#FFF"/></svg></div>
<div class="t" style="left:253.5px;top:415px">Pieter (Beek)</div>
<div class="t" style="left:462px;top:417px">Nederland</div>
<div class="t" style="left:584px;top:417px">3.6</div>
<div class="ic" style="left:674px;top:417px"><svg width="7" height="11" viewBox="0 0 7 11"><rect x="2.85" y="0.3" width="1.3" height="7.2" fill="#FF0000"/><path d="M0 7 H7 L3.5 11 Z" fill="#FF0000"/></svg></div>
<div class="t" style="left:706px;top:417px">49</div>
<div class="t" style="left:817px;top:417px">86</div>
<div class="t" style="left:900px;top:417px">274.3</div>
<div class="c" style="left:2px;top:431.820px;width:30px;height:16.580px;background:#FFFFFF"></div>
<div class="c" style="left:34px;top:431.820px;width:49px;height:16.580px;background:#FFFFFF"></div>
<div class="c" style="left:85px;top:431.820px;width:147px;height:16.580px;background:#FFFFFF"></div>
<div class="c" style="left:234px;top:431.820px;width:225px;height:16.580px;background:#FFFFFF"></div>
<div class="c" style="left:461px;top:431.820px;width:120px;height:16.580px;background:#FFFFFF"></div>
<div class="c" style="left:583px;top:431.820px;width:88px;height:16.580px;background:#FFFFFF"></div>
<div class="c" style="left:673px;top:431.820px;width:30px;height:16.580px;background:#FFFFFF"></div>
<div class="c" style="left:705px;top:431.820px;width:80px;height:16.580px;background:#FFFFFF"></div>
<div class="c" style="left:786px;top:431.820px;width:29px;height:16.580px;background:#FFFFFF"></div>
<div class="c" style="left:817px;top:431.820px;width:50px;height:16.580px;background:#FFFFFF"></div>
<div class="c" style="left:868px;top:431.820px;width:28px;height:16.580px;background:#FFFFFF"></div>
<div class="c" style="left:898px;top:431.820px;width:50px;height:16.580px;background:#FFFFFF"></div>
<div class="c" style="left:950px;top:431.820px;width:68px;height:16.580px;background:#FFFFFF"></div>
<div class="t" style="left:3px;top:435px">15</div>
<div class="ic" style="left:34px;top:433.5px"><svg width="7" height="11" viewBox="0 0 7 11"><path d="M3.5 0 L7 4 H0 Z" fill="#00F000"/><rect x="2.85" y="3.5" width="1.3" height="7.2" fill="#00F000"/></svg></div>
<div class="t" style="left:43.5px;top:435px">(+8)</div>
<div class="t" style="left:86px;top:435px">122</div>
<div class="ic" style="left:235px;top:438px"><svg width="10" height="10" viewBox="0 0 10 10"><rect x="0" y="0" width="10" height="10" rx="1" fill="#0000FF"/><path d="M1.2 1.5 H8.8 V2.6 H6.2 V7.9 H8.8 V9.1 H1.2 V7.9 H3.6 V2.6 H1.2 Z" fill="#FFF"/></svg></div>
<div class="t" style="left:253.5px;top:433px">Arjan (Genemuiden)</div>
<div class="t" style="left:462px;top:435px">Nederland</div>
<div class="t" style="left:584px;top:435px">4.5</div>
<div class="ic" style="left:674px;top:437px"><svg width="10" height="7" viewBox="0 0 10 7"><path d="M0 3.5 L3.5 0 V7 Z" fill="#FF7A00"/><path d="M10 3.5 L6.5 0 V7 Z" fill="#FF7A00"/><rect x="3" y="2.8" width="4" height="1.4" fill="#FF7A00"/></svg></div>
<div class="t" style="left:706px;top:435px">61</div>
<div class="t" style="left:817px;top:435px">98</div>
<div class="t" style="left:900px;top:435px">273.5</div>
<div class="c" style="left:2px;top:450.000px;width:30px;height:16.580px;background:#FFFFFF"></div>
<div class="c" style="left:34px;top:450.000px;width:49px;height:16.580px;background:#FFFFFF"></div>
<div class="c" style="left:85px;top:450.000px;width:147px;height:16.580px;background:#FFFFFF"></div>
<div class="c" style="left:234px;top:450.000px;width:225px;height:16.580px;background:#FFFFFF"></div>
<div class="c" style="left:461px;top:450.000px;width:120px;height:16.580px;background:#FFFFFF"></div>
<div class="c" style="left:583px;top:450.000px;width:88px;height:16.580px;background:#FFFFFF"></div>
<div class="c" style="left:673px;top:450.000px;width:30px;height:16.580px;background:#FFFFFF"></div>
<div class="c" style="left:705px;top:450.000px;width:80px;height:16.580px;background:#FFFFFF"></div>
<div class="c" style="left:786px;top:450.000px;width:29px;height:16.580px;background:#FFFFFF"></div>
<div class="c" style="left:817px;top:450.000px;width:50px;height:16.580px;background:#FFFFFF"></div>
<div class="c" style="left:868px;top:450.000px;width:28px;height:16.580px;background:#FFFFFF"></div>
<div class="c" style="left:898px;top:450.000px;width:50px;height:16.580px;background:#FFFFFF"></div>
<div class="c" style="left:950px;top:450.000px;width:68px;height:16.580px;background:#FFFFFF"></div>
<div class="t rd" style="left:3px;top:453px">16</div>
<div class="ic" style="left:34px;top:451.5px"><svg width="7" height="11" viewBox="0 0 7 11"><path d="M3.5 0 L7 4 H0 Z" fill="#00F000"/><rect x="2.85" y="3.5" width="1.3" height="7.2" fill="#00F000"/></svg></div>
<div class="t rd" style="left:43.5px;top:453px">(+2)</div>
<div class="t rd" style="left:86px;top:453px">68</div>
<div class="ic" style="left:235px;top:456px"><svg width="10" height="10" viewBox="0 0 10 10"><rect x="0" y="0" width="10" height="10" rx="1" fill="#0000FF"/><path d="M1.2 1.5 H8.8 V2.6 H6.2 V7.9 H8.8 V9.1 H1.2 V7.9 H3.6 V2.6 H1.2 Z" fill="#FFF"/></svg></div>
<div class="t rd" style="left:253.5px;top:452px">GEMIDDELD BE</div>
<div class="t rd" style="left:462px;top:453px">België</div>
<div class="t rd" style="left:584px;top:453px">4</div>
<div class="ic" style="left:674px;top:453px"><svg width="7" height="11" viewBox="0 0 7 11"><rect x="2.85" y="0.3" width="1.3" height="7.2" fill="#FF0000"/><path d="M0 7 H7 L3.5 11 Z" fill="#FF0000"/></svg></div>
<div class="t rd" style="left:706px;top:453px">59</div>
<div class="t rd" style="left:817px;top:453px">87</div>
<div class="t rd" style="left:900px;top:453px">273.4</div>
<div class="c" style="left:2px;top:468.180px;width:30px;height:16.580px;background:#FFFFFF"></div>
<div class="c" style="left:34px;top:468.180px;width:49px;height:16.580px;background:#FFFFFF"></div>
<div class="c" style="left:85px;top:468.180px;width:147px;height:16.580px;background:#FFFFFF"></div>
<div class="c" style="left:234px;top:468.180px;width:225px;height:16.580px;background:#FFFFFF"></div>
<div class="c" style="left:461px;top:468.180px;width:120px;height:16.580px;background:#FFFFFF"></div>
<div class="c" style="left:583px;top:468.180px;width:88px;height:16.580px;background:#FFFFFF"></div>
<div class="c" style="left:673px;top:468.180px;width:30px;height:16.580px;background:#FFFFFF"></div>
<div class="c" style="left:705px;top:468.180px;width:80px;height:16.580px;background:#FFFFFF"></div>
<div class="c" style="left:786px;top:468.180px;width:29px;height:16.580px;background:#FFFFFF"></div>
<div class="c" style="left:817px;top:468.180px;width:50px;height:16.580px;background:#FFFFFF"></div>
<div class="c" style="left:868px;top:468.180px;width:28px;height:16.580px;background:#FFFFFF"></div>
<div class="c" style="left:898px;top:468.180px;width:50px;height:16.580px;background:#FFFFFF"></div>
<div class="c" style="left:950px;top:468.180px;width:68px;height:16.580px;background:#FFFFFF"></div>
<div class="t" style="left:3px;top:471px">17</div>
<div class="ic" style="left:34px;top:469.5px"><svg width="7" height="11" viewBox="0 0 7 11"><path d="M3.5 0 L7 4 H0 Z" fill="#00F000"/><rect x="2.85" y="3.5" width="1.3" height="7.2" fill="#00F000"/></svg></div>
<div class="t" style="left:43.5px;top:471px">(+23)</div>
<div class="t" style="left:86px;top:471px">117</div>
<div class="ic" style="left:235px;top:474px"><svg width="10" height="10" viewBox="0 0 10 10"><rect x="0" y="0" width="10" height="10" rx="1" fill="#0000FF"/><path d="M1.2 1.5 H8.8 V2.6 H6.2 V7.9 H8.8 V9.1 H1.2 V7.9 H3.6 V2.6 H1.2 Z" fill="#FFF"/></svg></div>
<div class="t" style="left:253.5px;top:470px">David (Amsterdam)</div>
<div class="t" style="left:462px;top:471px">Nederland</div>
<div class="t" style="left:584px;top:471px">4.6</div>
<div class="ic" style="left:674px;top:471px"><svg width="7" height="11" viewBox="0 0 7 11"><path d="M3.5 0 L7 4 H0 Z" fill="#00F000"/><rect x="2.85" y="3.5" width="1.3" height="7.2" fill="#00F000"/></svg></div>
<div class="t" style="left:706px;top:471px">43</div>
<div class="t" style="left:817px;top:471px">111</div>
<div class="t" style="left:900px;top:471px">273.1</div>
<div class="c" style="left:2px;top:486.360px;width:30px;height:16.580px;background:#FFFFFF"></div>
<div class="c" style="left:34px;top:486.360px;width:49px;height:16.580px;background:#FFFFFF"></div>
<div class="c" style="left:85px;top:486.360px;width:147px;height:16.580px;background:#FFFFFF"></div>
<div class="c" style="left:234px;top:486.360px;width:225px;height:16.580px;background:#FFFFFF"></div>
<div class="c" style="left:461px;top:486.360px;width:120px;height:16.580px;background:#FFFFFF"></div>
<div class="c" style="left:583px;top:486.360px;width:88px;height:16.580px;background:#FFFFFF"></div>
<div class="c" style="left:673px;top:486.360px;width:30px;height:16.580px;background:#FFFFFF"></div>
<div class="c" style="left:705px;top:486.360px;width:80px;height:16.580px;background:#FFFFFF"></div>
<div class="c" style="left:786px;top:486.360px;width:29px;height:16.580px;background:#FFFFFF"></div>
<div class="c" style="left:817px;top:486.360px;width:50px;height:16.580px;background:#FFFFFF"></div>
<div class="c" style="left:868px;top:486.360px;width:28px;height:16.580px;background:#FFFFFF"></div>
<div class="c" style="left:898px;top:486.360px;width:50px;height:16.580px;background:#FFFFFF"></div>
<div class="c" style="left:950px;top:486.360px;width:68px;height:16.580px;background:#FFFFFF"></div>
<div class="t" style="left:3px;top:489px">18</div>
<div class="ic" style="left:34px;top:487.5px"><svg width="7" height="11" viewBox="0 0 7 11"><path d="M3.5 0 L7 4 H0 Z" fill="#00F000"/><rect x="2.85" y="3.5" width="1.3" height="7.2" fill="#00F000"/></svg></div>
<div class="t" style="left:43.5px;top:489px">(+2)</div>
<div class="t" style="left:86px;top:489px">21</div>
<div class="ic" style="left:235px;top:492px"><svg width="10" height="10" viewBox="0 0 10 10"><rect x="0" y="0" width="10" height="10" rx="1" fill="#0000FF"/><path d="M1.2 1.5 H8.8 V2.6 H6.2 V7.9 H8.8 V9.1 H1.2 V7.9 H3.6 V2.6 H1.2 Z" fill="#FFF"/></svg></div>
<div class="t" style="left:253.5px;top:488px">David Pennekamp (De Goorn)</div>
<div class="t" style="left:462px;top:489px">Nederland</div>
<div class="t" style="left:584px;top:489px">3.6</div>
<div class="ic" style="left:674px;top:489px"><svg width="7" height="11" viewBox="0 0 7 11"><rect x="2.85" y="0.3" width="1.3" height="7.2" fill="#FF0000"/><path d="M0 7 H7 L3.5 11 Z" fill="#FF0000"/></svg></div>
<div class="t" style="left:706px;top:489px">53</div>
<div class="t" style="left:817px;top:489px">88</div>
<div class="t" style="left:900px;top:489px">272.7</div>
<div class="c" style="left:2px;top:504.540px;width:30px;height:16.580px;background:#FFFFFF"></div>
<div class="c" style="left:34px;top:504.540px;width:49px;height:16.580px;background:#FFFFFF"></div>
<div class="c" style="left:85px;top:504.540px;width:147px;height:16.580px;background:#FFFFFF"></div>
<div class="c" style="left:234px;top:504.540px;width:225px;height:16.580px;background:#FFFFFF"></div>
<div class="c" style="left:461px;top:504.540px;width:120px;height:16.580px;background:#FFFFFF"></div>
<div class="c" style="left:583px;top:504.540px;width:88px;height:16.580px;background:#FFFFFF"></div>
<div class="c" style="left:673px;top:504.540px;width:30px;height:16.580px;background:#FFFFFF"></div>
<div class="c" style="left:705px;top:504.540px;width:80px;height:16.580px;background:#FFFFFF"></div>
<div class="c" style="left:786px;top:504.540px;width:29px;height:16.580px;background:#FFFFFF"></div>
<div class="c" style="left:817px;top:504.540px;width:50px;height:16.580px;background:#FFFFFF"></div>
<div class="c" style="left:868px;top:504.540px;width:28px;height:16.580px;background:#FFFFFF"></div>
<div class="c" style="left:898px;top:504.540px;width:50px;height:16.580px;background:#FFFFFF"></div>
<div class="c" style="left:950px;top:504.540px;width:68px;height:16.580px;background:#FFFFFF"></div>
<div class="t" style="left:3px;top:508px">19</div>
<div class="ic" style="left:34px;top:506.5px"><svg width="7" height="11" viewBox="0 0 7 11"><path d="M3.5 0 L7 4 H0 Z" fill="#00F000"/><rect x="2.85" y="3.5" width="1.3" height="7.2" fill="#00F000"/></svg></div>
<div class="t" style="left:43.5px;top:508px">(+2)</div>
<div class="t" style="left:86px;top:508px">124</div>
<div class="ic" style="left:235px;top:511px"><svg width="10" height="10" viewBox="0 0 10 10"><rect x="0" y="0" width="10" height="10" rx="1" fill="#0000FF"/><path d="M1.2 1.5 H8.8 V2.6 H6.2 V7.9 H8.8 V9.1 H1.2 V7.9 H3.6 V2.6 H1.2 Z" fill="#FFF"/></svg></div>
<div class="t" style="left:253.5px;top:506px">Thomas (Vorden)</div>
<div class="t" style="left:462px;top:508px">Nederland</div>
<div class="t" style="left:584px;top:508px">3.9</div>
<div class="ic" style="left:674px;top:508px"><svg width="7" height="11" viewBox="0 0 7 11"><rect x="2.85" y="0.3" width="1.3" height="7.2" fill="#FF0000"/><path d="M0 7 H7 L3.5 11 Z" fill="#FF0000"/></svg></div>
<div class="t" style="left:706px;top:508px">58</div>
<div class="t" style="left:817px;top:508px">87</div>
<div class="t" style="left:900px;top:508px">272.5</div>
<div class="c" style="left:2px;top:522.720px;width:30px;height:16.580px;background:#FFFFFF"></div>
<div class="c" style="left:34px;top:522.720px;width:49px;height:16.580px;background:#FFFFFF"></div>
<div class="c" style="left:85px;top:522.720px;width:147px;height:16.580px;background:#FFFFFF"></div>
<div class="c" style="left:234px;top:522.720px;width:225px;height:16.580px;background:#FFFFFF"></div>
<div class="c" style="left:461px;top:522.720px;width:120px;height:16.580px;background:#FFFFFF"></div>
<div class="c" style="left:583px;top:522.720px;width:88px;height:16.580px;background:#FFFFFF"></div>
<div class="c" style="left:673px;top:522.720px;width:30px;height:16.580px;background:#FFFFFF"></div>
<div class="c" style="left:705px;top:522.720px;width:80px;height:16.580px;background:#FFFFFF"></div>
<div class="c" style="left:786px;top:522.720px;width:29px;height:16.580px;background:#FFFFFF"></div>
<div class="c" style="left:817px;top:522.720px;width:50px;height:16.580px;background:#FFFFFF"></div>
<div class="c" style="left:868px;top:522.720px;width:28px;height:16.580px;background:#FFFFFF"></div>
<div class="c" style="left:898px;top:522.720px;width:50px;height:16.580px;background:#FFFFFF"></div>
<div class="c" style="left:950px;top:522.720px;width:68px;height:16.580px;background:#FFFFFF"></div>
<div class="t rd" style="left:3px;top:526px">20</div>
<div class="ic" style="left:34px;top:524.5px"><svg width="7" height="11" viewBox="0 0 7 11"><path d="M3.5 0 L7 4 H0 Z" fill="#00F000"/><rect x="2.85" y="3.5" width="1.3" height="7.2" fill="#00F000"/></svg></div>
<div class="t rd" style="left:43.5px;top:526px">(+25)</div>
<div class="t rd" style="left:86px;top:526px">59</div>
<div class="ic" style="left:235px;top:529px"><svg width="10" height="10" viewBox="0 0 10 10"><rect x="0" y="0" width="10" height="10" rx="1" fill="#0000FF"/><path d="M1.2 1.5 H8.8 V2.6 H6.2 V7.9 H8.8 V9.1 H1.2 V7.9 H3.6 V2.6 H1.2 Z" fill="#FFF"/></svg></div>
<div class="t rd" style="left:253.5px;top:524px">GEMIDDELD</div>
<div class="t rd" style="left:462px;top:526px">Anders</div>
<div class="t rd" style="left:584px;top:526px">3.5</div>
<div class="ic" style="left:674px;top:526px"><svg width="7" height="11" viewBox="0 0 7 11"><rect x="2.85" y="0.3" width="1.3" height="7.2" fill="#FF0000"/><path d="M0 7 H7 L3.5 11 Z" fill="#FF0000"/></svg></div>
<div class="t rd" style="left:706px;top:526px">58</div>
<div class="t rd" style="left:817px;top:526px">89</div>
<div class="t rd" style="left:900px;top:526px">272.3</div>
<div class="t rd" style="left:951px;top:526px">(267.3 + 5)</div>
<div class="c" style="left:2px;top:540.900px;width:30px;height:16.580px;background:#FFFFFF"></div>
<div class="c" style="left:34px;top:540.900px;width:49px;height:16.580px;background:#FFFFFF"></div>
<div class="c" style="left:85px;top:540.900px;width:147px;height:16.580px;background:#FFFFFF"></div>
<div class="c" style="left:234px;top:540.900px;width:225px;height:16.580px;background:#FFFFFF"></div>
<div class="c" style="left:461px;top:540.900px;width:120px;height:16.580px;background:#FFFFFF"></div>
<div class="c" style="left:583px;top:540.900px;width:88px;height:16.580px;background:#FFFFFF"></div>
<div class="c" style="left:673px;top:540.900px;width:30px;height:16.580px;background:#FFFFFF"></div>
<div class="c" style="left:705px;top:540.900px;width:80px;height:16.580px;background:#FFFFFF"></div>
<div class="c" style="left:786px;top:540.900px;width:29px;height:16.580px;background:#FFFFFF"></div>
<div class="c" style="left:817px;top:540.900px;width:50px;height:16.580px;background:#FFFFFF"></div>
<div class="c" style="left:868px;top:540.900px;width:28px;height:16.580px;background:#FFFFFF"></div>
<div class="c" style="left:898px;top:540.900px;width:50px;height:16.580px;background:#FFFFFF"></div>
<div class="c" style="left:950px;top:540.900px;width:68px;height:16.580px;background:#FFFFFF"></div>
<div class="t" style="left:3px;top:544px">21</div>
<div class="ic" style="left:34px;top:542.5px"><svg width="7" height="11" viewBox="0 0 7 11"><path d="M3.5 0 L7 4 H0 Z" fill="#00F000"/><rect x="2.85" y="3.5" width="1.3" height="7.2" fill="#00F000"/></svg></div>
<div class="t" style="left:43.5px;top:544px">(+4)</div>
<div class="t" style="left:86px;top:544px">150</div>
<div class="ic" style="left:235px;top:547px"><svg width="10" height="10" viewBox="0 0 10 10"><rect x="0" y="0" width="10" height="10" rx="1" fill="#0000FF"/><path d="M1.2 1.5 H8.8 V2.6 H6.2 V7.9 H8.8 V9.1 H1.2 V7.9 H3.6 V2.6 H1.2 Z" fill="#FFF"/></svg></div>
<div class="t" style="left:253.5px;top:542px">Ridwan (Maasland)</div>
<div class="t" style="left:462px;top:544px">Nederland</div>
<div class="t" style="left:584px;top:544px">4.5</div>
<div class="ic" style="left:674px;top:546px"><svg width="10" height="7" viewBox="0 0 10 7"><path d="M0 3.5 L3.5 0 V7 Z" fill="#FF7A00"/><path d="M10 3.5 L6.5 0 V7 Z" fill="#FF7A00"/><rect x="3" y="2.8" width="4" height="1.4" fill="#FF7A00"/></svg></div>
<div class="t" style="left:706px;top:544px">57</div>
<div class="t" style="left:817px;top:544px">103</div>
<div class="t" style="left:900px;top:544px">272.1</div>
<div class="c" style="left:2px;top:559.080px;width:30px;height:16.580px;background:#FFFFFF"></div>
<div class="c" style="left:34px;top:559.080px;width:49px;height:16.580px;background:#FFFFFF"></div>
<div class="c" style="left:85px;top:559.080px;width:147px;height:16.580px;background:#FFFFFF"></div>
<div class="c" style="left:234px;top:559.080px;width:225px;height:16.580px;background:#FFFFFF"></div>
<div class="c" style="left:461px;top:559.080px;width:120px;height:16.580px;background:#FFFFFF"></div>
<div class="c" style="left:583px;top:559.080px;width:88px;height:16.580px;background:#FFFFFF"></div>
<div class="c" style="left:673px;top:559.080px;width:30px;height:16.580px;background:#FFFFFF"></div>
<div class="c" style="left:705px;top:559.080px;width:80px;height:16.580px;background:#FFFFFF"></div>
<div class="c" style="left:786px;top:559.080px;width:29px;height:16.580px;background:#FFFFFF"></div>
<div class="c" style="left:817px;top:559.080px;width:50px;height:16.580px;background:#FFFFFF"></div>
<div class="c" style="left:868px;top:559.080px;width:28px;height:16.580px;background:#FFFFFF"></div>
<div class="c" style="left:898px;top:559.080px;width:50px;height:16.580px;background:#FFFFFF"></div>
<div class="c" style="left:950px;top:559.080px;width:68px;height:16.580px;background:#FFFFFF"></div>
<div class="t" style="left:3px;top:562px">22</div>
<div class="ic" style="left:34px;top:560.5px"><svg width="7" height="11" viewBox="0 0 7 11"><path d="M3.5 0 L7 4 H0 Z" fill="#00F000"/><rect x="2.85" y="3.5" width="1.3" height="7.2" fill="#00F000"/></svg></div>
<div class="t" style="left:43.5px;top:562px">(+33)</div>
<div class="t" style="left:86px;top:562px">38</div>
<div class="ic" style="left:235px;top:565px"><svg width="10" height="10" viewBox="0 0 10 10"><rect x="0" y="0" width="10" height="10" rx="1" fill="#0000FF"/><path d="M1.2 1.5 H8.8 V2.6 H6.2 V7.9 H8.8 V9.1 H1.2 V7.9 H3.6 V2.6 H1.2 Z" fill="#FFF"/></svg></div>
<div class="t" style="left:253.5px;top:561px">Moreno (Opglabbeek)</div>
<div class="t" style="left:462px;top:562px">België</div>
<div class="t" style="left:584px;top:562px">4.8</div>
<div class="ic" style="left:674px;top:562px"><svg width="7" height="11" viewBox="0 0 7 11"><path d="M3.5 0 L7 4 H0 Z" fill="#00F000"/><rect x="2.85" y="3.5" width="1.3" height="7.2" fill="#00F000"/></svg></div>
<div class="t" style="left:706px;top:562px">68</div>
<div class="t" style="left:817px;top:562px">95</div>
<div class="t" style="left:900px;top:562px">271.9</div>
<div class="c" style="left:2px;top:577.260px;width:30px;height:16.580px;background:#FFFFFF"></div>
<div class="c" style="left:34px;top:577.260px;width:49px;height:16.580px;background:#FFFFFF"></div>
<div class="c" style="left:85px;top:577.260px;width:147px;height:16.580px;background:#FFFFFF"></div>
<div class="c" style="left:234px;top:577.260px;width:225px;height:16.580px;background:#FFFFFF"></div>
<div class="c" style="left:461px;top:577.260px;width:120px;height:16.580px;background:#FFFFFF"></div>
<div class="c" style="left:583px;top:577.260px;width:88px;height:16.580px;background:#FFFFFF"></div>
<div class="c" style="left:673px;top:577.260px;width:30px;height:16.580px;background:#FFFFFF"></div>
<div class="c" style="left:705px;top:577.260px;width:80px;height:16.580px;background:#FFFFFF"></div>
<div class="c" style="left:786px;top:577.260px;width:29px;height:16.580px;background:#FFFFFF"></div>
<div class="c" style="left:817px;top:577.260px;width:50px;height:16.580px;background:#FFFFFF"></div>
<div class="c" style="left:868px;top:577.260px;width:28px;height:16.580px;background:#FFFFFF"></div>
<div class="c" style="left:898px;top:577.260px;width:50px;height:16.580px;background:#FFFFFF"></div>
<div class="c" style="left:950px;top:577.260px;width:68px;height:16.580px;background:#FFFFFF"></div>
<div class="t" style="left:3px;top:580px">23</div>
<div class="ic" style="left:34px;top:578.5px"><svg width="7" height="11" viewBox="0 0 7 11"><rect x="2.85" y="0.3" width="1.3" height="7.2" fill="#FF0000"/><path d="M0 7 H7 L3.5 11 Z" fill="#FF0000"/></svg></div>
<div class="t" style="left:43.5px;top:580px">(-13)</div>
<div class="t" style="left:86px;top:580px">98</div>
<div class="ic" style="left:235px;top:583px"><svg width="10" height="10" viewBox="0 0 10 10"><rect x="0" y="0" width="10" height="10" rx="1" fill="#0000FF"/><path d="M1.2 1.5 H8.8 V2.6 H6.2 V7.9 H8.8 V9.1 H1.2 V7.9 H3.6 V2.6 H1.2 Z" fill="#FFF"/></svg></div>
<div class="t" style="left:253.5px;top:579px">Casper (Lichtenvoorde)</div>
<div class="t" style="left:462px;top:580px">Nederland</div>
<div class="t" style="left:584px;top:580px">3.8</div>
<div class="ic" style="left:674px;top:580px"><svg width="7" height="11" viewBox="0 0 7 11"><rect x="2.85" y="0.3" width="1.3" height="7.2" fill="#FF0000"/><path d="M0 7 H7 L3.5 11 Z" fill="#FF0000"/></svg></div>
<div class="t" style="left:706px;top:580px">55</div>
<div class="t" style="left:817px;top:580px">93</div>
<div class="t" style="left:900px;top:580px">271.4</div>
<div class="c" style="left:2px;top:595.440px;width:30px;height:16.580px;background:#FFFFFF"></div>
<div class="c" style="left:34px;top:595.440px;width:49px;height:16.580px;background:#FFFFFF"></div>
<div class="c" style="left:85px;top:595.440px;width:147px;height:16.580px;background:#FFFFFF"></div>
<div class="c" style="left:234px;top:595.440px;width:225px;height:16.580px;background:#FFFFFF"></div>
<div class="c" style="left:461px;top:595.440px;width:120px;height:16.580px;background:#FFFFFF"></div>
<div class="c" style="left:583px;top:595.440px;width:88px;height:16.580px;background:#FFFFFF"></div>
<div class="c" style="left:673px;top:595.440px;width:30px;height:16.580px;background:#FFFFFF"></div>
<div class="c" style="left:705px;top:595.440px;width:80px;height:16.580px;background:#FFFFFF"></div>
<div class="c" style="left:786px;top:595.440px;width:29px;height:16.580px;background:#FFFFFF"></div>
<div class="c" style="left:817px;top:595.440px;width:50px;height:16.580px;background:#FFFFFF"></div>
<div class="c" style="left:868px;top:595.440px;width:28px;height:16.580px;background:#FFFFFF"></div>
<div class="c" style="left:898px;top:595.440px;width:50px;height:16.580px;background:#FFFFFF"></div>
<div class="c" style="left:950px;top:595.440px;width:68px;height:16.580px;background:#FFFFFF"></div>
<div class="t" style="left:3px;top:598px">24</div>
<div class="t" style="left:86px;top:598px">102</div>
<div class="ic" style="left:235px;top:601px"><svg width="10" height="10" viewBox="0 0 10 10"><rect x="0" y="0" width="10" height="10" rx="1" fill="#0000FF"/><path d="M1.2 1.5 H8.8 V2.6 H6.2 V7.9 H8.8 V9.1 H1.2 V7.9 H3.6 V2.6 H1.2 Z" fill="#FFF"/></svg></div>
<div class="t" style="left:253.5px;top:597px">Ed (Tilburg)</div>
<div class="t" style="left:462px;top:598px">Nederland</div>
<div class="t" style="left:584px;top:598px">3.6</div>
<div class="ic" style="left:674px;top:598px"><svg width="7" height="11" viewBox="0 0 7 11"><rect x="2.85" y="0.3" width="1.3" height="7.2" fill="#FF0000"/><path d="M0 7 H7 L3.5 11 Z" fill="#FF0000"/></svg></div>
<div class="t" style="left:706px;top:598px">42</div>
<div class="t" style="left:817px;top:598px">84</div>
<div class="t" style="left:900px;top:598px">271.3</div>
<div class="c" style="left:2px;top:613.620px;width:30px;height:16.580px;background:#FFFFFF"></div>
<div class="c" style="left:34px;top:613.620px;width:49px;height:16.580px;background:#FFFFFF"></div>
<div class="c" style="left:85px;top:613.620px;width:147px;height:16.580px;background:#FFFFFF"></div>
<div class="c" style="left:234px;top:613.620px;width:225px;height:16.580px;background:#FFFFFF"></div>
<div class="c" style="left:461px;top:613.620px;width:120px;height:16.580px;background:#FFFFFF"></div>
<div class="c" style="left:583px;top:613.620px;width:88px;height:16.580px;background:#FFFFFF"></div>
<div class="c" style="left:673px;top:613.620px;width:30px;height:16.580px;background:#FFFFFF"></div>
<div class="c" style="left:705px;top:613.620px;width:80px;height:16.580px;background:#FFFFFF"></div>
<div class="c" style="left:786px;top:613.620px;width:29px;height:16.580px;background:#FFFFFF"></div>
<div class="c" style="left:817px;top:613.620px;width:50px;height:16.580px;background:#FFFFFF"></div>
<div class="c" style="left:868px;top:613.620px;width:28px;height:16.580px;background:#FFFFFF"></div>
<div class="c" style="left:898px;top:613.620px;width:50px;height:16.580px;background:#FFFFFF"></div>
<div class="c" style="left:950px;top:613.620px;width:68px;height:16.580px;background:#FFFFFF"></div>
<div class="t" style="left:3px;top:617px">25</div>
<div class="ic" style="left:34px;top:615.5px"><svg width="7" height="11" viewBox="0 0 7 11"><path d="M3.5 0 L7 4 H0 Z" fill="#00F000"/><rect x="2.85" y="3.5" width="1.3" height="7.2" fill="#00F000"/></svg></div>
<div class="t" style="left:43.5px;top:617px">(+23)</div>
<div class="t" style="left:86px;top:617px">148</div>
<div class="ic" style="left:235px;top:620px"><svg width="10" height="10" viewBox="0 0 10 10"><rect x="0" y="0" width="10" height="10" rx="1" fill="#0000FF"/><path d="M1.2 1.5 H8.8 V2.6 H6.2 V7.9 H8.8 V9.1 H1.2 V7.9 H3.6 V2.6 H1.2 Z" fill="#FFF"/></svg></div>
<div class="t" style="left:253.5px;top:615px">Jm (Tervuren)</div>
<div class="t" style="left:462px;top:617px">België</div>
<div class="t" style="left:584px;top:617px">4.6</div>
<div class="ic" style="left:674px;top:617px"><svg width="7" height="11" viewBox="0 0 7 11"><path d="M3.5 0 L7 4 H0 Z" fill="#00F000"/><rect x="2.85" y="3.5" width="1.3" height="7.2" fill="#00F000"/></svg></div>
<div class="t" style="left:706px;top:617px">70</div>
<div class="t" style="left:817px;top:617px">94</div>
<div class="t" style="left:900px;top:617px">271.1</div>
<div class="c" style="left:2px;top:631.800px;width:30px;height:16.580px;background:#FFFFFF"></div>
<div class="c" style="left:34px;top:631.800px;width:49px;height:16.580px;background:#FFFFFF"></div>
<div class="c" style="left:85px;top:631.800px;width:147px;height:16.580px;background:#FFFFFF"></div>
<div class="c" style="left:234px;top:631.800px;width:225px;height:16.580px;background:#FFFFFF"></div>
<div class="c" style="left:461px;top:631.800px;width:120px;height:16.580px;background:#FFFFFF"></div>
<div class="c" style="left:583px;top:631.800px;width:88px;height:16.580px;background:#FFFFFF"></div>
<div class="c" style="left:673px;top:631.800px;width:30px;height:16.580px;background:#FFFFFF"></div>
<div class="c" style="left:705px;top:631.800px;width:80px;height:16.580px;background:#FFFFFF"></div>
<div class="c" style="left:786px;top:631.800px;width:29px;height:16.580px;background:#FFFFFF"></div>
<div class="c" style="left:817px;top:631.800px;width:50px;height:16.580px;background:#FFFFFF"></div>
<div class="c" style="left:868px;top:631.800px;width:28px;height:16.580px;background:#FFFFFF"></div>
<div class="c" style="left:898px;top:631.800px;width:50px;height:16.580px;background:#FFFFFF"></div>
<div class="c" style="left:950px;top:631.800px;width:68px;height:16.580px;background:#FFFFFF"></div>
<div class="t" style="left:3px;top:635px">26</div>
<div class="ic" style="left:34px;top:633.5px"><svg width="7" height="11" viewBox="0 0 7 11"><rect x="2.85" y="0.3" width="1.3" height="7.2" fill="#FF0000"/><path d="M0 7 H7 L3.5 11 Z" fill="#FF0000"/></svg></div>
<div class="t" style="left:43.5px;top:635px">(-1)</div>
<div class="t" style="left:86px;top:635px">76</div>
<div class="ic" style="left:235px;top:638px"><svg width="10" height="10" viewBox="0 0 10 10"><rect x="0" y="0" width="10" height="10" rx="1" fill="#0000FF"/><path d="M1.2 1.5 H8.8 V2.6 H6.2 V7.9 H8.8 V9.1 H1.2 V7.9 H3.6 V2.6 H1.2 Z" fill="#FFF"/></svg></div>
<div class="t" style="left:253.5px;top:633px">Robert (Vleuten)</div>
<div class="t" style="left:462px;top:635px">Nederland</div>
<div class="t" style="left:584px;top:635px">4.1</div>
<div class="ic" style="left:674px;top:635px"><svg width="7" height="11" viewBox="0 0 7 11"><rect x="2.85" y="0.3" width="1.3" height="7.2" fill="#FF0000"/><path d="M0 7 H7 L3.5 11 Z" fill="#FF0000"/></svg></div>
<div class="t" style="left:706px;top:635px">47</div>
<div class="t" style="left:817px;top:635px">72</div>
<div class="t" style="left:900px;top:635px">270.9</div>
<div class="c" style="left:2px;top:649.980px;width:30px;height:16.580px;background:#FFFFFF"></div>
<div class="c" style="left:34px;top:649.980px;width:49px;height:16.580px;background:#FFFFFF"></div>
<div class="c" style="left:85px;top:649.980px;width:147px;height:16.580px;background:#FFFFFF"></div>
<div class="c" style="left:234px;top:649.980px;width:225px;height:16.580px;background:#FFFFFF"></div>
<div class="c" style="left:461px;top:649.980px;width:120px;height:16.580px;background:#FFFFFF"></div>
<div class="c" style="left:583px;top:649.980px;width:88px;height:16.580px;background:#FFFFFF"></div>
<div class="c" style="left:673px;top:649.980px;width:30px;height:16.580px;background:#FFFFFF"></div>
<div class="c" style="left:705px;top:649.980px;width:80px;height:16.580px;background:#FFFFFF"></div>
<div class="c" style="left:786px;top:649.980px;width:29px;height:16.580px;background:#FFFFFF"></div>
<div class="c" style="left:817px;top:649.980px;width:50px;height:16.580px;background:#FFFFFF"></div>
<div class="c" style="left:868px;top:649.980px;width:28px;height:16.580px;background:#FFFFFF"></div>
<div class="c" style="left:898px;top:649.980px;width:50px;height:16.580px;background:#FFFFFF"></div>
<div class="c" style="left:950px;top:649.980px;width:68px;height:16.580px;background:#FFFFFF"></div>
<div class="t" style="left:3px;top:653px">27</div>
<div class="ic" style="left:34px;top:651.5px"><svg width="7" height="11" viewBox="0 0 7 11"><path d="M3.5 0 L7 4 H0 Z" fill="#00F000"/><rect x="2.85" y="3.5" width="1.3" height="7.2" fill="#00F000"/></svg></div>
<div class="t" style="left:43.5px;top:653px">(+2)</div>
<div class="t" style="left:86px;top:653px">66</div>
<div class="ic" style="left:235px;top:656px"><svg width="10" height="10" viewBox="0 0 10 10"><rect x="0" y="0" width="10" height="10" rx="1" fill="#0000FF"/><path d="M1.2 1.5 H8.8 V2.6 H6.2 V7.9 H8.8 V9.1 H1.2 V7.9 H3.6 V2.6 H1.2 Z" fill="#FFF"/></svg></div>
<div class="t" style="left:253.5px;top:651px">Frans (Franeker)</div>
<div class="t" style="left:462px;top:653px">Nederland</div>
<div class="t" style="left:584px;top:653px">3.9</div>
<div class="ic" style="left:674px;top:653px"><svg width="7" height="11" viewBox="0 0 7 11"><rect x="2.85" y="0.3" width="1.3" height="7.2" fill="#FF0000"/><path d="M0 7 H7 L3.5 11 Z" fill="#FF0000"/></svg></div>
<div class="t" style="left:706px;top:653px">58</div>
<div class="t" style="left:817px;top:653px">85</div>
<div class="t" style="left:900px;top:653px">270.5</div>
<div class="c" style="left:2px;top:668.160px;width:30px;height:16.580px;background:#FFFFFF"></div>
<div class="c" style="left:34px;top:668.160px;width:49px;height:16.580px;background:#FFFFFF"></div>
<div class="c" style="left:85px;top:668.160px;width:147px;height:16.580px;background:#FFFFFF"></div>
<div class="c" style="left:234px;top:668.160px;width:225px;height:16.580px;background:#FFFFFF"></div>
<div class="c" style="left:461px;top:668.160px;width:120px;height:16.580px;background:#FFFFFF"></div>
<div class="c" style="left:583px;top:668.160px;width:88px;height:16.580px;background:#FFFFFF"></div>
<div class="c" style="left:673px;top:668.160px;width:30px;height:16.580px;background:#FFFFFF"></div>
<div class="c" style="left:705px;top:668.160px;width:80px;height:16.580px;background:#FFFFFF"></div>
<div class="c" style="left:786px;top:668.160px;width:29px;height:16.580px;background:#FFFFFF"></div>
<div class="c" style="left:817px;top:668.160px;width:50px;height:16.580px;background:#FFFFFF"></div>
<div class="c" style="left:868px;top:668.160px;width:28px;height:16.580px;background:#FFFFFF"></div>
<div class="c" style="left:898px;top:668.160px;width:50px;height:16.580px;background:#FFFFFF"></div>
<div class="c" style="left:950px;top:668.160px;width:68px;height:16.580px;background:#FFFFFF"></div>
<div class="t" style="left:3px;top:671px">28</div>
<div class="ic" style="left:34px;top:669.5px"><svg width="7" height="11" viewBox="0 0 7 11"><rect x="2.85" y="0.3" width="1.3" height="7.2" fill="#FF0000"/><path d="M0 7 H7 L3.5 11 Z" fill="#FF0000"/></svg></div>
<div class="t" style="left:43.5px;top:671px">(-17)</div>
<div class="t" style="left:86px;top:671px">23</div>
<div class="ic" style="left:235px;top:674px"><svg width="10" height="10" viewBox="0 0 10 10"><rect x="0" y="0" width="10" height="10" rx="1" fill="#0000FF"/><path d="M1.2 1.5 H8.8 V2.6 H6.2 V7.9 H8.8 V9.1 H1.2 V7.9 H3.6 V2.6 H1.2 Z" fill="#FFF"/></svg></div>
<div class="t" style="left:253.5px;top:670px">Jan (Zwolle)</div>
<div class="t" style="left:462px;top:671px">Nederland</div>
<div class="t" style="left:584px;top:671px">4.1</div>
<div class="ic" style="left:674px;top:671px"><svg width="7" height="11" viewBox="0 0 7 11"><rect x="2.85" y="0.3" width="1.3" height="7.2" fill="#FF0000"/><path d="M0 7 H7 L3.5 11 Z" fill="#FF0000"/></svg></div>
<div class="t" style="left:706px;top:671px">60</div>
<div class="t" style="left:817px;top:671px">95</div>
<div class="t" style="left:900px;top:671px">270.2</div>
<div class="c" style="left:2px;top:686.340px;width:30px;height:16.580px;background:#FFFFFF"></div>
<div class="c" style="left:34px;top:686.340px;width:49px;height:16.580px;background:#FFFFFF"></div>
<div class="c" style="left:85px;top:686.340px;width:147px;height:16.580px;background:#FFFFFF"></div>
<div class="c" style="left:234px;top:686.340px;width:225px;height:16.580px;background:#FFFFFF"></div>
<div class="c" style="left:461px;top:686.340px;width:120px;height:16.580px;background:#FFFFFF"></div>
<div class="c" style="left:583px;top:686.340px;width:88px;height:16.580px;background:#FFFFFF"></div>
<div class="c" style="left:673px;top:686.340px;width:30px;height:16.580px;background:#FFFFFF"></div>
<div class="c" style="left:705px;top:686.340px;width:80px;height:16.580px;background:#FFFFFF"></div>
<div class="c" style="left:786px;top:686.340px;width:29px;height:16.580px;background:#FFFFFF"></div>
<div class="c" style="left:817px;top:686.340px;width:50px;height:16.580px;background:#FFFFFF"></div>
<div class="c" style="left:868px;top:686.340px;width:28px;height:16.580px;background:#FFFFFF"></div>
<div class="c" style="left:898px;top:686.340px;width:50px;height:16.580px;background:#FFFFFF"></div>
<div class="c" style="left:950px;top:686.340px;width:68px;height:16.580px;background:#FFFFFF"></div>
<div class="t" style="left:3px;top:689px">29</div>
<div class="ic" style="left:34px;top:687.5px"><svg width="7" height="11" viewBox="0 0 7 11"><path d="M3.5 0 L7 4 H0 Z" fill="#00F000"/><rect x="2.85" y="3.5" width="1.3" height="7.2" fill="#00F000"/></svg></div>
<div class="t" style="left:43.5px;top:689px">(+3)</div>
<div class="t" style="left:86px;top:689px">999 / nieuw</div>
<div class="ic" style="left:235px;top:692px"><svg width="10" height="10" viewBox="0 0 10 10"><rect x="0" y="0" width="10" height="10" rx="1" fill="#0000FF"/><path d="M1.2 1.5 H8.8 V2.6 H6.2 V7.9 H8.8 V9.1 H1.2 V7.9 H3.6 V2.6 H1.2 Z" fill="#FFF"/></svg></div>
<div class="t" style="left:253.5px;top:688px">Hendrik (Londerzeel België)</div>
<div class="t" style="left:462px;top:689px">België</div>
<div class="t" style="left:584px;top:689px">4.1</div>
<div class="ic" style="left:674px;top:689px"><svg width="7" height="11" viewBox="0 0 7 11"><rect x="2.85" y="0.3" width="1.3" height="7.2" fill="#FF0000"/><path d="M0 7 H7 L3.5 11 Z" fill="#FF0000"/></svg></div>
<div class="t" style="left:706px;top:689px">66</div>
<div class="t" style="left:817px;top:689px">88</div>
<div class="t" style="left:900px;top:689px">269.8</div>
<div class="c" style="left:2px;top:704.520px;width:30px;height:16.580px;background:#FFFFFF"></div>
<div class="c" style="left:34px;top:704.520px;width:49px;height:16.580px;background:#FFFFFF"></div>
<div class="c" style="left:85px;top:704.520px;width:147px;height:16.580px;background:#FFFFFF"></div>
<div class="c" style="left:234px;top:704.520px;width:225px;height:16.580px;background:#FFFFFF"></div>
<div class="c" style="left:461px;top:704.520px;width:120px;height:16.580px;background:#FFFFFF"></div>
<div class="c" style="left:583px;top:704.520px;width:88px;height:16.580px;background:#FFFFFF"></div>
<div class="c" style="left:673px;top:704.520px;width:30px;height:16.580px;background:#FFFFFF"></div>
<div class="c" style="left:705px;top:704.520px;width:80px;height:16.580px;background:#FFFFFF"></div>
<div class="c" style="left:786px;top:704.520px;width:29px;height:16.580px;background:#FFFFFF"></div>
<div class="c" style="left:817px;top:704.520px;width:50px;height:16.580px;background:#FFFFFF"></div>
<div class="c" style="left:868px;top:704.520px;width:28px;height:16.580px;background:#FFFFFF"></div>
<div class="c" style="left:898px;top:704.520px;width:50px;height:16.580px;background:#FFFFFF"></div>
<div class="c" style="left:950px;top:704.520px;width:68px;height:16.580px;background:#FFFFFF"></div>
<div class="t" style="left:3px;top:708px">30</div>
<div class="ic" style="left:34px;top:706.5px"><svg width="7" height="11" viewBox="0 0 7 11"><rect x="2.85" y="0.3" width="1.3" height="7.2" fill="#FF0000"/><path d="M0 7 H7 L3.5 11 Z" fill="#FF0000"/></svg></div>
<div class="t" style="left:43.5px;top:708px">(-23)</div>
<div class="t" style="left:86px;top:708px">79</div>
<div class="ic" style="left:235px;top:711px"><svg width="10" height="10" viewBox="0 0 10 10"><rect x="0" y="0" width="10" height="10" rx="1" fill="#0000FF"/><path d="M1.2 1.5 H8.8 V2.6 H6.2 V7.9 H8.8 V9.1 H1.2 V7.9 H3.6 V2.6 H1.2 Z" fill="#FFF"/></svg></div>
<div class="t" style="left:253.5px;top:706px">Geert (Lint)</div>
<div class="t" style="left:462px;top:708px">België</div>
<div class="t" style="left:584px;top:708px">4.3</div>
<div class="ic" style="left:674px;top:708px"><svg width="7" height="11" viewBox="0 0 7 11"><rect x="2.85" y="0.3" width="1.3" height="7.2" fill="#FF0000"/><path d="M0 7 H7 L3.5 11 Z" fill="#FF0000"/></svg></div>
<div class="t" style="left:706px;top:708px">57</div>
<div class="t" style="left:817px;top:708px">102</div>
<div class="t" style="left:900px;top:708px">269.5</div>
<div class="c" style="left:2px;top:722.700px;width:30px;height:16.580px;background:#FFFFFF"></div>
<div class="c" style="left:34px;top:722.700px;width:49px;height:16.580px;background:#FFFFFF"></div>
<div class="c" style="left:85px;top:722.700px;width:147px;height:16.580px;background:#FFFFFF"></div>
<div class="c" style="left:234px;top:722.700px;width:225px;height:16.580px;background:#FFFFFF"></div>
<div class="c" style="left:461px;top:722.700px;width:120px;height:16.580px;background:#FFFFFF"></div>
<div class="c" style="left:583px;top:722.700px;width:88px;height:16.580px;background:#FFFFFF"></div>
<div class="c" style="left:673px;top:722.700px;width:30px;height:16.580px;background:#FFFFFF"></div>
<div class="c" style="left:705px;top:722.700px;width:80px;height:16.580px;background:#FFFFFF"></div>
<div class="c" style="left:786px;top:722.700px;width:29px;height:16.580px;background:#FFFFFF"></div>
<div class="c" style="left:817px;top:722.700px;width:50px;height:16.580px;background:#FFFFFF"></div>
<div class="c" style="left:868px;top:722.700px;width:28px;height:16.580px;background:#FFFFFF"></div>
<div class="c" style="left:898px;top:722.700px;width:50px;height:16.580px;background:#FFFFFF"></div>
<div class="c" style="left:950px;top:722.700px;width:68px;height:16.580px;background:#FFFFFF"></div>
<div class="t" style="left:3px;top:726px">31</div>
<div class="ic" style="left:34px;top:724.5px"><svg width="7" height="11" viewBox="0 0 7 11"><path d="M3.5 0 L7 4 H0 Z" fill="#00F000"/><rect x="2.85" y="3.5" width="1.3" height="7.2" fill="#00F000"/></svg></div>
<div class="t" style="left:43.5px;top:726px">(+4)</div>
<div class="t" style="left:86px;top:726px">6</div>
<div class="ic" style="left:235px;top:729px"><svg width="10" height="10" viewBox="0 0 10 10"><rect x="0" y="0" width="10" height="10" rx="1" fill="#0000FF"/><path d="M1.2 1.5 H8.8 V2.6 H6.2 V7.9 H8.8 V9.1 H1.2 V7.9 H3.6 V2.6 H1.2 Z" fill="#FFF"/></svg></div>
<div class="t" style="left:253.5px;top:724px">Daniël (Aalsmeer)</div>
<div class="t" style="left:462px;top:726px">Nederland</div>
<div class="t" style="left:584px;top:726px">3.6</div>
<div class="ic" style="left:674px;top:726px"><svg width="7" height="11" viewBox="0 0 7 11"><rect x="2.85" y="0.3" width="1.3" height="7.2" fill="#FF0000"/><path d="M0 7 H7 L3.5 11 Z" fill="#FF0000"/></svg></div>
<div class="t" style="left:706px;top:726px">47</div>
<div class="t" style="left:817px;top:726px">79</div>
<div class="t" style="left:900px;top:726px">269</div>
<div class="c" style="left:2px;top:740.880px;width:30px;height:16.580px;background:#FFFFFF"></div>
<div class="c" style="left:34px;top:740.880px;width:49px;height:16.580px;background:#FFFFFF"></div>
<div class="c" style="left:85px;top:740.880px;width:147px;height:16.580px;background:#FFFFFF"></div>
<div class="c" style="left:234px;top:740.880px;width:225px;height:16.580px;background:#FFFFFF"></div>
<div class="c" style="left:461px;top:740.880px;width:120px;height:16.580px;background:#FFFFFF"></div>
<div class="c" style="left:583px;top:740.880px;width:88px;height:16.580px;background:#FFFFFF"></div>
<div class="c" style="left:673px;top:740.880px;width:30px;height:16.580px;background:#FFFFFF"></div>
<div class="c" style="left:705px;top:740.880px;width:80px;height:16.580px;background:#FFFFFF"></div>
<div class="c" style="left:786px;top:740.880px;width:29px;height:16.580px;background:#FFFFFF"></div>
<div class="c" style="left:817px;top:740.880px;width:50px;height:16.580px;background:#FFFFFF"></div>
<div class="c" style="left:868px;top:740.880px;width:28px;height:16.580px;background:#FFFFFF"></div>
<div class="c" style="left:898px;top:740.880px;width:50px;height:16.580px;background:#FFFFFF"></div>
<div class="c" style="left:950px;top:740.880px;width:68px;height:16.580px;background:#FFFFFF"></div>
<div class="t rd" style="left:3px;top:744px">32</div>
<div class="ic" style="left:34px;top:742.5px"><svg width="7" height="11" viewBox="0 0 7 11"><rect x="2.85" y="0.3" width="1.3" height="7.2" fill="#FF0000"/><path d="M0 7 H7 L3.5 11 Z" fill="#FF0000"/></svg></div>
<div class="t rd" style="left:43.5px;top:744px">(-7)</div>
<div class="t rd" style="left:86px;top:744px">80</div>
<div class="ic" style="left:235px;top:747px"><svg width="10" height="10" viewBox="0 0 10 10"><rect x="0" y="0" width="10" height="10" rx="1" fill="#0000FF"/><path d="M1.2 1.5 H8.8 V2.6 H6.2 V7.9 H8.8 V9.1 H1.2 V7.9 H3.6 V2.6 H1.2 Z" fill="#FFF"/></svg></div>
<div class="t rd" style="left:253.5px;top:742px">NORMAAL</div>
<div class="t rd" style="left:462px;top:744px">Anders</div>
<div class="t rd" style="left:584px;top:744px">3.9</div>
<div class="ic" style="left:674px;top:744px"><svg width="7" height="11" viewBox="0 0 7 11"><rect x="2.85" y="0.3" width="1.3" height="7.2" fill="#FF0000"/><path d="M0 7 H7 L3.5 11 Z" fill="#FF0000"/></svg></div>
<div class="t rd" style="left:706px;top:744px">63</div>
<div class="t rd" style="left:817px;top:744px">90</div>
<div class="t rd" style="left:900px;top:744px">268.9</div>
<div class="c" style="left:2px;top:759.060px;width:30px;height:16.580px;background:#FFFFFF"></div>
<div class="c" style="left:34px;top:759.060px;width:49px;height:16.580px;background:#FFFFFF"></div>
<div class="c" style="left:85px;top:759.060px;width:147px;height:16.580px;background:#FFFFFF"></div>
<div class="c" style="left:234px;top:759.060px;width:225px;height:16.580px;background:#FFFFFF"></div>
<div class="c" style="left:461px;top:759.060px;width:120px;height:16.580px;background:#FFFFFF"></div>
<div class="c" style="left:583px;top:759.060px;width:88px;height:16.580px;background:#FFFFFF"></div>
<div class="c" style="left:673px;top:759.060px;width:30px;height:16.580px;background:#FFFFFF"></div>
<div class="c" style="left:705px;top:759.060px;width:80px;height:16.580px;background:#FFFFFF"></div>
<div class="c" style="left:786px;top:759.060px;width:29px;height:16.580px;background:#FFFFFF"></div>
<div class="c" style="left:817px;top:759.060px;width:50px;height:16.580px;background:#FFFFFF"></div>
<div class="c" style="left:868px;top:759.060px;width:28px;height:16.580px;background:#FFFFFF"></div>
<div class="c" style="left:898px;top:759.060px;width:50px;height:16.580px;background:#FFFFFF"></div>
<div class="c" style="left:950px;top:759.060px;width:68px;height:16.580px;background:#FFFFFF"></div>
<div class="t" style="left:3px;top:762px">32</div>
<div class="ic" style="left:34px;top:760.5px"><svg width="7" height="11" viewBox="0 0 7 11"><rect x="2.85" y="0.3" width="1.3" height="7.2" fill="#FF0000"/><path d="M0 7 H7 L3.5 11 Z" fill="#FF0000"/></svg></div>
<div class="t" style="left:43.5px;top:762px">(-24)</div>
<div class="t" style="left:86px;top:762px">5</div>
<div class="ic" style="left:235px;top:765px"><svg width="10" height="10" viewBox="0 0 10 10"><rect x="0" y="0" width="10" height="10" rx="1" fill="#0000FF"/><path d="M1.2 1.5 H8.8 V2.6 H6.2 V7.9 H8.8 V9.1 H1.2 V7.9 H3.6 V2.6 H1.2 Z" fill="#FFF"/></svg></div>
<div class="t" style="left:253.5px;top:761px">Jan Willem (Gouda)</div>
<div class="t" style="left:462px;top:762px">Nederland</div>
<div class="t" style="left:584px;top:762px">4.3</div>
<div class="ic" style="left:674px;top:762px"><svg width="7" height="11" viewBox="0 0 7 11"><rect x="2.85" y="0.3" width="1.3" height="7.2" fill="#FF0000"/><path d="M0 7 H7 L3.5 11 Z" fill="#FF0000"/></svg></div>
<div class="t" style="left:706px;top:762px">51</div>
<div class="t" style="left:817px;top:762px">108</div>
<div class="t" style="left:900px;top:762px">268.9</div>
<div class="c" style="left:2px;top:777.240px;width:30px;height:16.580px;background:#FFFFFF"></div>
<div class="c" style="left:34px;top:777.240px;width:49px;height:16.580px;background:#FFFFFF"></div>
<div class="c" style="left:85px;top:777.240px;width:147px;height:16.580px;background:#FFFFFF"></div>
<div class="c" style="left:234px;top:777.240px;width:225px;height:16.580px;background:#FFFFFF"></div>
<div class="c" style="left:461px;top:777.240px;width:120px;height:16.580px;background:#FFFFFF"></div>
<div class="c" style="left:583px;top:777.240px;width:88px;height:16.580px;background:#FFFFFF"></div>
<div class="c" style="left:673px;top:777.240px;width:30px;height:16.580px;background:#FFFFFF"></div>
<div class="c" style="left:705px;top:777.240px;width:80px;height:16.580px;background:#FFFFFF"></div>
<div class="c" style="left:786px;top:777.240px;width:29px;height:16.580px;background:#FFFFFF"></div>
<div class="c" style="left:817px;top:777.240px;width:50px;height:16.580px;background:#FFFFFF"></div>
<div class="c" style="left:868px;top:777.240px;width:28px;height:16.580px;background:#FFFFFF"></div>
<div class="c" style="left:898px;top:777.240px;width:50px;height:16.580px;background:#FFFFFF"></div>
<div class="c" style="left:950px;top:777.240px;width:68px;height:16.580px;background:#FFFFFF"></div>
<div class="t" style="left:3px;top:780px">32</div>
<div class="ic" style="left:34px;top:778.5px"><svg width="7" height="11" viewBox="0 0 7 11"><rect x="2.85" y="0.3" width="1.3" height="7.2" fill="#FF0000"/><path d="M0 7 H7 L3.5 11 Z" fill="#FF0000"/></svg></div>
<div class="t" style="left:43.5px;top:780px">(-19)</div>
<div class="t" style="left:86px;top:780px">56</div>
<div class="ic" style="left:235px;top:783px"><svg width="10" height="10" viewBox="0 0 10 10"><rect x="0" y="0" width="10" height="10" rx="1" fill="#0000FF"/><path d="M1.2 1.5 H8.8 V2.6 H6.2 V7.9 H8.8 V9.1 H1.2 V7.9 H3.6 V2.6 H1.2 Z" fill="#FFF"/></svg></div>
<div class="t" style="left:253.5px;top:779px">Alexander (Juberri - Andorra)</div>
<div class="t" style="left:462px;top:780px">Anders</div>
<div class="t" style="left:584px;top:780px">3.7</div>
<div class="ic" style="left:674px;top:780px"><svg width="7" height="11" viewBox="0 0 7 11"><rect x="2.85" y="0.3" width="1.3" height="7.2" fill="#FF0000"/><path d="M0 7 H7 L3.5 11 Z" fill="#FF0000"/></svg></div>
<div class="t" style="left:706px;top:780px">48</div>
<div class="t" style="left:817px;top:780px">100</div>
<div class="t" style="left:900px;top:780px">268.9</div>
<div class="c" style="left:2px;top:795.420px;width:30px;height:16.580px;background:#FFFFFF"></div>
<div class="c" style="left:34px;top:795.420px;width:49px;height:16.580px;background:#FFFFFF"></div>
<div class="c" style="left:85px;top:795.420px;width:147px;height:16.580px;background:#FFFFFF"></div>
<div class="c" style="left:234px;top:795.420px;width:225px;height:16.580px;background:#FFFFFF"></div>
<div class="c" style="left:461px;top:795.420px;width:120px;height:16.580px;background:#FFFFFF"></div>
<div class="c" style="left:583px;top:795.420px;width:88px;height:16.580px;background:#FFFFFF"></div>
<div class="c" style="left:673px;top:795.420px;width:30px;height:16.580px;background:#FFFFFF"></div>
<div class="c" style="left:705px;top:795.420px;width:80px;height:16.580px;background:#FFFFFF"></div>
<div class="c" style="left:786px;top:795.420px;width:29px;height:16.580px;background:#FFFFFF"></div>
<div class="c" style="left:817px;top:795.420px;width:50px;height:16.580px;background:#FFFFFF"></div>
<div class="c" style="left:868px;top:795.420px;width:28px;height:16.580px;background:#FFFFFF"></div>
<div class="c" style="left:898px;top:795.420px;width:50px;height:16.580px;background:#FFFFFF"></div>
<div class="c" style="left:950px;top:795.420px;width:68px;height:16.580px;background:#FFFFFF"></div>
<div class="t" style="left:3px;top:798px">35</div>
<div class="ic" style="left:34px;top:796.5px"><svg width="7" height="11" viewBox="0 0 7 11"><path d="M3.5 0 L7 4 H0 Z" fill="#00F000"/><rect x="2.85" y="3.5" width="1.3" height="7.2" fill="#00F000"/></svg></div>
<div class="t" style="left:43.5px;top:798px">(+1)</div>
<div class="t" style="left:86px;top:798px">146</div>
<div class="ic" style="left:235px;top:801px"><svg width="10" height="10" viewBox="0 0 10 10"><rect x="0" y="0" width="10" height="10" rx="1" fill="#0000FF"/><path d="M1.2 1.5 H8.8 V2.6 H6.2 V7.9 H8.8 V9.1 H1.2 V7.9 H3.6 V2.6 H1.2 Z" fill="#FFF"/></svg></div>
<div class="t" style="left:253.5px;top:797px">Jaap (Groningen)</div>
<div class="t" style="left:462px;top:798px">Nederland</div>
<div class="t" style="left:584px;top:798px">4.0</div>
<div class="ic" style="left:674px;top:798px"><svg width="7" height="11" viewBox="0 0 7 11"><rect x="2.85" y="0.3" width="1.3" height="7.2" fill="#FF0000"/><path d="M0 7 H7 L3.5 11 Z" fill="#FF0000"/></svg></div>
<div class="t" style="left:706px;top:798px">54</div>
<div class="t" style="left:817px;top:798px">78</div>
<div class="t" style="left:900px;top:798px">268.8</div>
</body></html>
